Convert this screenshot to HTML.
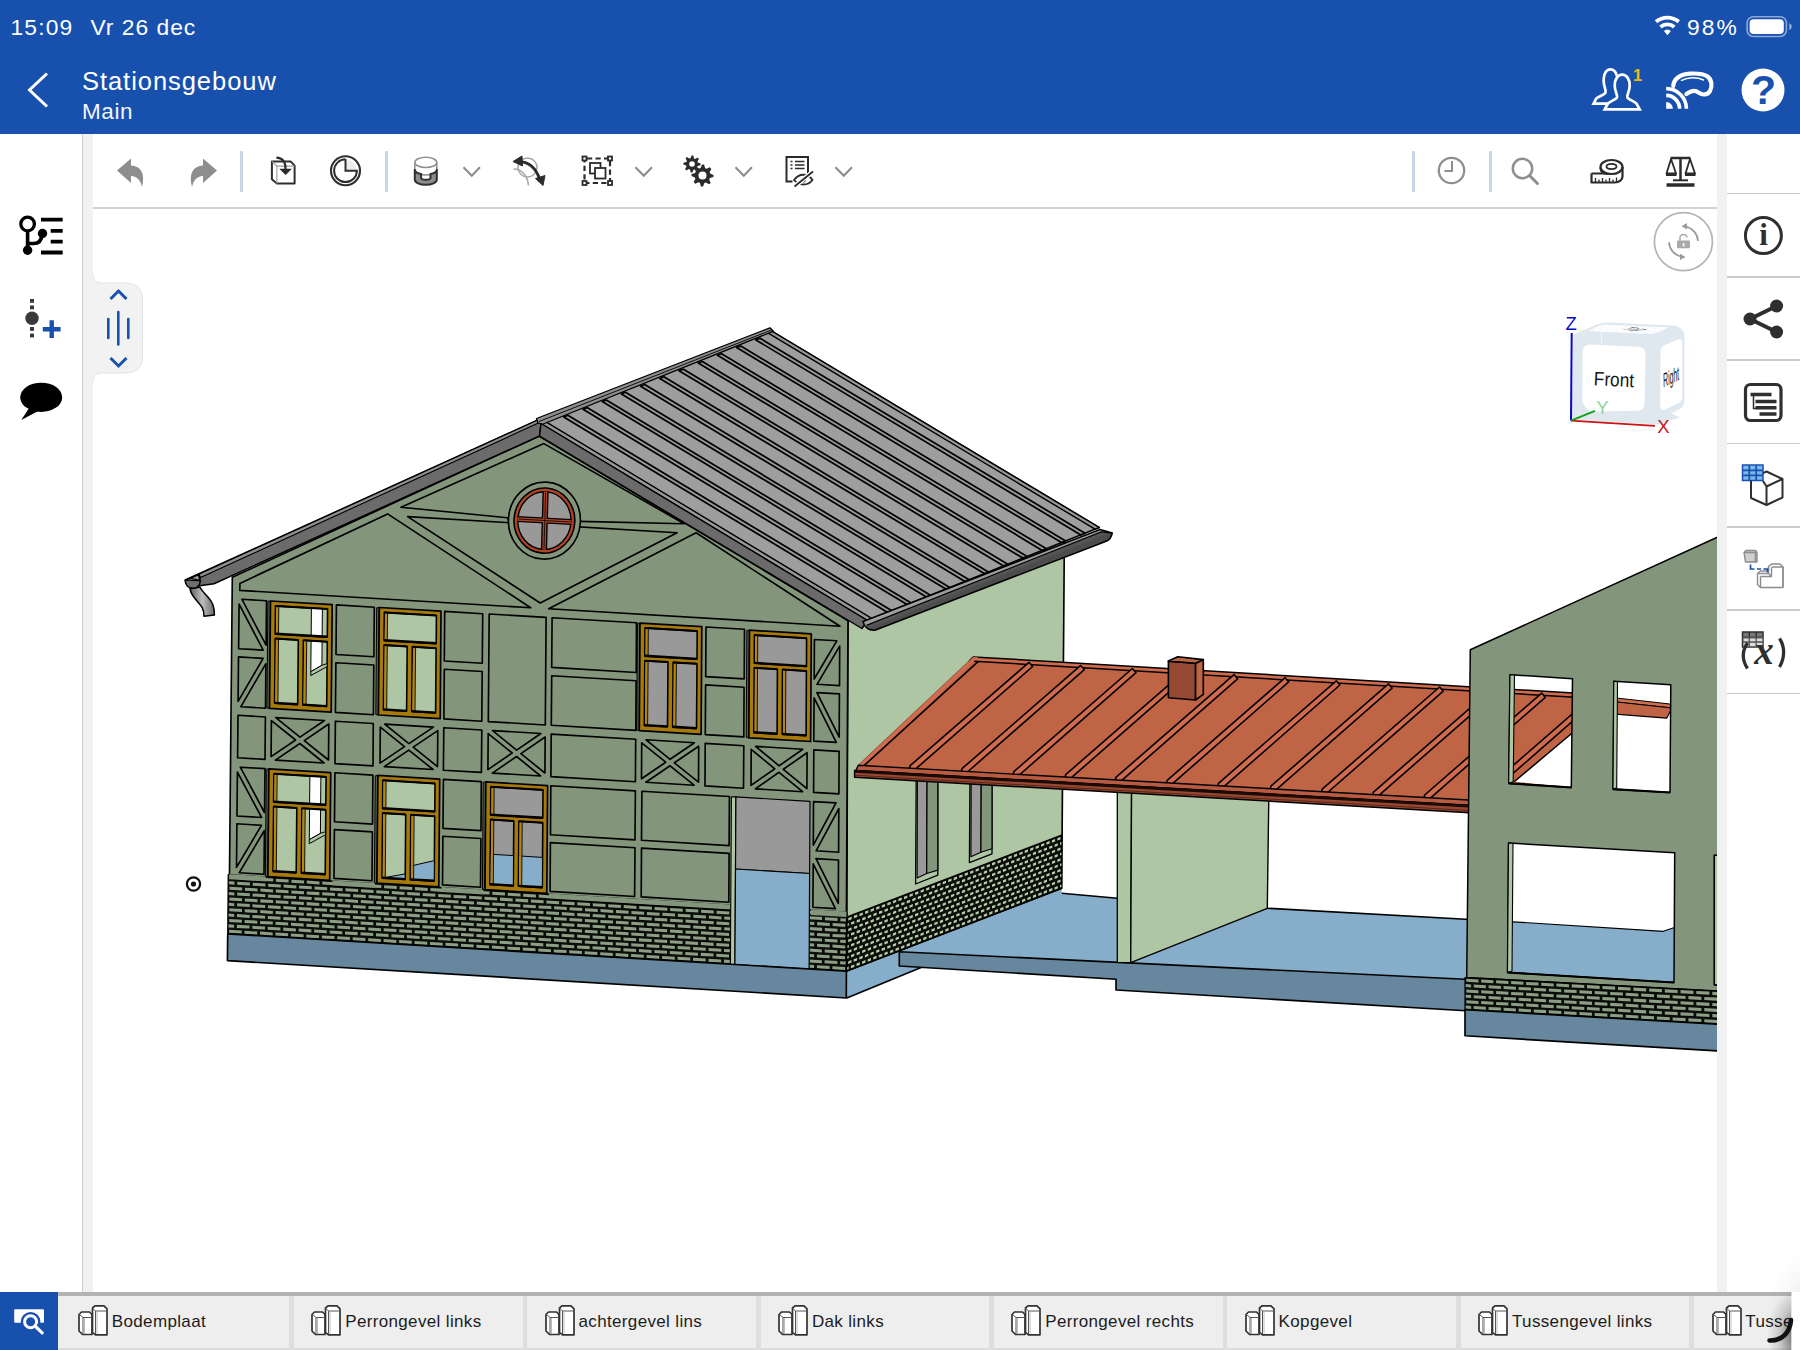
<!DOCTYPE html>
<html lang="nl"><head><meta charset="utf-8"><title>Stationsgebouw</title>
<style>
*{box-sizing:border-box;margin:0;padding:0}
html,body{width:1800px;height:1350px;overflow:hidden;background:#fff;font-family:"Liberation Sans",sans-serif;}
#app{position:relative;width:1800px;height:1350px;overflow:hidden;background:#fff}
.abs{position:absolute}
#hdr{position:absolute;left:0;top:0;width:1800px;height:134.4px;background:#1850ae;color:#fff}
#hdr .t{position:absolute;white-space:nowrap;line-height:1}
#lbar{position:absolute;left:82px;top:134px;width:11px;height:1158px;background:#f1f1f1;border-left:1px solid #cfcfcf}
#rbar{position:absolute;left:1717px;top:134px;width:10px;height:1158px;background:#f1f1f1}
#tline{position:absolute;left:93px;top:207px;width:1624px;height:2px;background:#d4d4d4}
.vdiv{position:absolute;width:3px;height:41px;top:150.5px;background:#c9d6e6;border-radius:1px}
.rsep{position:absolute;left:1727px;width:73px;height:1.6px;background:#cbcbcb}
#tabs{position:absolute;left:0;top:1292px;width:1791.5px;height:58px;background:#eeeeee;overflow:hidden}
#tabs .top{position:absolute;left:0;top:0;width:100%;height:4px;background:#b3b3b3}
#tabs .bot{position:absolute;left:0;top:55.5px;width:100%;height:3px;background:#dcdcdc}
#tabs .sep{position:absolute;top:4px;width:4.5px;height:54px;background:#dedede}
#tabs .lbl{position:absolute;top:19.5px;font-size:17px;line-height:20px;color:#1c1c1c;white-space:nowrap;letter-spacing:0.35px}
#tabs svg.ti{position:absolute;top:13px}
#srch{position:absolute;left:0;top:1292px;width:58px;height:58px;background:#1850ae}
svg{overflow:visible}
</style></head><body><div id="app">
<svg class="abs" style="left:93px;top:209px" width="1624" height="1083" viewBox="93 209 1624 1083" fill="none" stroke-linejoin="round"><defs><clipPath id="vp"><rect x="93" y="209" width="1624" height="1083"/></clipPath></defs><g clip-path="url(#vp)">
<polygon points="846.8,971.0 1061.7,888.3 1061.7,893.3 1117.3,898.3 1117.3,962.5 899.3,951.7 921.7,967.3 846.8,998.0" fill="#86aeca" stroke="none" stroke-width="1.65" />
<polyline points="846.8,998.0 921.7,967.3" fill="none" stroke="#000" stroke-width="1.65" />
<polyline points="1061.7,893.3 1117.3,898.3" fill="none" stroke="#000" stroke-width="1.65" />
<polygon points="1130.7,962.7 1267.3,908.3 1470.0,919.5 1470.0,979.5" fill="#86aeca" stroke="none" stroke-width="1.65" />
<polyline points="1267.3,908.3 1470.0,919.5" fill="none" stroke="#000" stroke-width="1.65" />
<polygon points="899.3,951.7 1470.0,979.5 1470.0,1011.0 1116.0,990.0 1116.0,979.3 899.3,966.0" fill="#66879e" stroke="#000" stroke-width="1.65" />
<polygon points="848.0,600.0 1064.5,520.0 1061.7,888.3 846.6,971.0" fill="#aec6a4" stroke="#000" stroke-width="1.65" />
<polygon points="916.2,770.0 937.8,770.0 937.8,875.1 915.6,884.0" fill="#aec6a4" stroke="#000" stroke-width="1.3" />
<polygon points="917.4,770.0 927.1,770.0 926.7,873.5 917.1,878.0" fill="#999999" stroke="#000" stroke-width="1.2" />
<polygon points="927.1,770.0 937.8,770.0 937.8,870.1 926.7,873.5" fill="#83957b" stroke="#000" stroke-width="1.2" />
<polygon points="970.0,770.0 992.0,770.0 992.0,853.8 969.4,862.7" fill="#aec6a4" stroke="#000" stroke-width="1.3" />
<polygon points="971.2,770.0 981.3,770.0 980.9,852.2 970.9,856.7" fill="#999999" stroke="#000" stroke-width="1.2" />
<polygon points="981.3,770.0 992.0,770.0 992.0,848.8 980.9,852.2" fill="#83957b" stroke="#000" stroke-width="1.2" />
<polygon points="847.2,916.9 1061.6,835.1 1061.6,888.4 847.0,971.2" fill="#0b0d0a" stroke="#000" stroke-width="1.2" />
<path d="M848.3 917.9L851.7 916.7L851.7 919.2L848.3 920.4ZM853.9 915.8L857.3 914.5L857.2 917.0L853.9 918.3ZM859.5 913.7L862.8 912.4L862.8 914.9L859.5 916.2ZM865.1 911.5L868.4 910.3L868.4 912.8L865.1 914.0ZM870.6 909.4L874.0 908.1L874.0 910.6L870.6 911.9ZM876.2 907.3L879.5 906.0L879.5 908.5L876.2 909.8ZM881.8 905.2L885.1 903.9L885.1 906.4L881.8 907.7ZM887.3 903.0L890.7 901.8L890.7 904.3L887.3 905.5ZM892.9 900.9L896.2 899.7L896.2 902.1L892.9 903.4ZM898.4 898.8L901.8 897.5L901.8 900.0L898.4 901.3ZM904.0 896.7L907.3 895.4L907.3 897.9L904.0 899.2ZM909.5 894.6L912.8 893.3L912.8 895.8L909.5 897.1ZM915.1 892.5L918.4 891.2L918.4 893.7L915.1 894.9ZM920.6 890.4L923.9 889.1L923.9 891.6L920.6 892.8ZM926.1 888.2L929.4 887.0L929.4 889.5L926.1 890.7ZM931.6 886.1L934.9 884.9L934.9 887.4L931.6 888.6ZM937.2 884.0L940.5 882.8L940.5 885.2L937.1 886.5ZM942.7 881.9L946.0 880.7L946.0 883.1L942.7 884.4ZM948.2 879.8L951.5 878.6L951.5 881.0L948.2 882.3ZM953.7 877.7L957.0 876.5L957.0 878.9L953.7 880.2ZM959.2 875.6L962.5 874.4L962.5 876.8L959.2 878.1ZM964.7 873.5L967.9 872.3L967.9 874.7L964.7 876.0ZM970.1 871.4L973.4 870.2L973.4 872.7L970.1 873.9ZM975.6 869.4L978.9 868.1L978.9 870.6L975.6 871.8ZM981.1 867.3L984.4 866.0L984.4 868.5L981.1 869.7ZM986.6 865.2L989.9 863.9L989.9 866.4L986.6 867.6ZM992.0 863.1L995.3 861.8L995.3 864.3L992.0 865.5ZM997.5 861.0L1000.8 859.8L1000.8 862.2L997.5 863.5ZM1003.0 858.9L1006.2 857.7L1006.2 860.1L1003.0 861.4ZM1008.4 856.8L1011.7 855.6L1011.7 858.0L1008.4 859.3ZM1013.9 854.8L1017.1 853.5L1017.1 856.0L1013.9 857.2ZM1019.3 852.7L1022.6 851.4L1022.6 853.9L1019.3 855.1ZM1024.7 850.6L1028.0 849.4L1028.0 851.8L1024.7 853.1ZM1030.2 848.5L1033.4 847.3L1033.4 849.7L1030.2 851.0ZM1035.6 846.5L1038.9 845.2L1038.9 847.7L1035.6 848.9ZM1041.0 844.4L1044.3 843.1L1044.3 845.6L1041.0 846.8ZM1046.5 842.3L1049.7 841.1L1049.7 843.5L1046.4 844.8ZM1051.9 840.3L1055.1 839.0L1055.1 841.5L1051.9 842.7ZM1057.3 838.2L1060.5 837.0L1060.5 839.4L1057.3 840.6ZM847.4 923.7L848.9 923.1L848.8 925.6L847.4 926.2ZM851.1 922.3L854.4 921.0L854.4 923.5L851.1 924.8ZM856.7 920.2L860.0 918.9L860.0 921.4L856.7 922.7ZM862.3 918.0L865.6 916.7L865.6 919.2L862.2 920.5ZM867.8 915.9L871.2 914.6L871.2 917.1L867.8 918.4ZM873.4 913.8L876.7 912.5L876.7 915.0L873.4 916.3ZM879.0 911.6L882.3 910.4L882.3 912.9L879.0 914.1ZM884.5 909.5L887.9 908.2L887.9 910.7L884.5 912.0ZM890.1 907.4L893.4 906.1L893.4 908.6L890.1 909.9ZM895.6 905.3L899.0 904.0L899.0 906.5L895.6 907.8ZM901.2 903.1L904.5 901.9L904.5 904.4L901.2 905.6ZM906.7 901.0L910.1 899.8L910.1 902.2L906.7 903.5ZM912.3 898.9L915.6 897.6L915.6 900.1L912.3 901.4ZM917.8 896.8L921.1 895.5L921.1 898.0L917.8 899.3ZM923.3 894.7L926.7 893.4L926.6 895.9L923.3 897.2ZM928.9 892.6L932.2 891.3L932.2 893.8L928.9 895.1ZM934.4 890.5L937.7 889.2L937.7 891.7L934.4 892.9ZM939.9 888.4L943.2 887.1L943.2 889.6L939.9 890.8ZM945.4 886.3L948.7 885.0L948.7 887.5L945.4 888.7ZM950.9 884.2L954.2 882.9L954.2 885.4L950.9 886.6ZM956.4 882.1L959.7 880.8L959.7 883.3L956.4 884.5ZM961.9 880.0L965.2 878.7L965.2 881.2L961.9 882.4ZM967.4 877.9L970.7 876.6L970.7 879.1L967.4 880.3ZM972.9 875.8L976.2 874.5L976.2 877.0L972.9 878.2ZM978.4 873.7L981.6 872.4L981.6 874.9L978.4 876.1ZM983.8 871.6L987.1 870.3L987.1 872.8L983.8 874.0ZM989.3 869.5L992.6 868.2L992.6 870.7L989.3 872.0ZM994.8 867.4L998.0 866.1L998.0 868.6L994.8 869.9ZM1000.2 865.3L1003.5 864.1L1003.5 866.5L1000.2 867.8ZM1005.7 863.2L1009.0 862.0L1009.0 864.4L1005.7 865.7ZM1011.1 861.1L1014.4 859.9L1014.4 862.4L1011.1 863.6ZM1016.6 859.1L1019.8 857.8L1019.8 860.3L1016.6 861.5ZM1022.0 857.0L1025.3 855.7L1025.3 858.2L1022.0 859.4ZM1027.5 854.9L1030.7 853.7L1030.7 856.1L1027.5 857.4ZM1032.9 852.8L1036.1 851.6L1036.1 854.0L1032.9 855.3ZM1038.3 850.8L1041.6 849.5L1041.6 852.0L1038.3 853.2ZM1043.7 848.7L1047.0 847.4L1047.0 849.9L1043.7 851.1ZM1049.2 846.6L1052.4 845.4L1052.4 847.8L1049.2 849.1ZM1054.6 844.5L1057.8 843.3L1057.8 845.8L1054.6 847.0ZM1060.0 842.5L1061.4 841.9L1061.4 844.4L1060.0 844.9ZM848.3 928.8L851.6 927.5L851.6 930.0L848.3 931.3ZM853.9 926.7L857.2 925.4L857.2 927.9L853.9 929.1ZM859.4 924.5L862.8 923.2L862.8 925.7L859.4 927.0ZM865.0 922.4L868.4 921.1L868.4 923.6L865.0 924.9ZM870.6 920.2L873.9 919.0L873.9 921.5L870.6 922.7ZM876.2 918.1L879.5 916.8L879.5 919.3L876.2 920.6ZM881.7 916.0L885.1 914.7L885.1 917.2L881.7 918.5ZM887.3 913.9L890.6 912.6L890.6 915.1L887.3 916.3ZM892.9 911.7L896.2 910.5L896.2 912.9L892.9 914.2ZM898.4 909.6L901.7 908.3L901.7 910.8L898.4 912.1ZM904.0 907.5L907.3 906.2L907.3 908.7L903.9 910.0ZM909.5 905.4L912.8 904.1L912.8 906.6L909.5 907.9ZM915.0 903.3L918.4 902.0L918.3 904.5L915.0 905.7ZM920.6 901.1L923.9 899.9L923.9 902.3L920.6 903.6ZM926.1 899.0L929.4 897.8L929.4 900.2L926.1 901.5ZM931.6 896.9L934.9 895.6L934.9 898.1L931.6 899.4ZM937.1 894.8L940.4 893.5L940.4 896.0L937.1 897.3ZM942.6 892.7L945.9 891.4L945.9 893.9L942.6 895.2ZM948.1 890.6L951.4 889.3L951.4 891.8L948.1 893.1ZM953.6 888.5L956.9 887.2L956.9 889.7L953.6 891.0ZM959.1 886.4L962.4 885.1L962.4 887.6L959.1 888.9ZM964.6 884.3L967.9 883.0L967.9 885.5L964.6 886.8ZM970.1 882.2L973.4 880.9L973.4 883.4L970.1 884.7ZM975.6 880.1L978.9 878.8L978.9 881.3L975.6 882.6ZM981.1 878.0L984.4 876.7L984.4 879.2L981.1 880.5ZM986.6 875.9L989.8 874.6L989.8 877.1L986.6 878.4ZM992.0 873.8L995.3 872.5L995.3 875.0L992.0 876.3ZM997.5 871.7L1000.8 870.5L1000.8 872.9L997.5 874.2ZM1002.9 869.6L1006.2 868.4L1006.2 870.8L1002.9 872.1ZM1008.4 867.5L1011.7 866.3L1011.7 868.7L1008.4 870.0ZM1013.9 865.5L1017.1 864.2L1017.1 866.7L1013.9 867.9ZM1019.3 863.4L1022.6 862.1L1022.6 864.6L1019.3 865.8ZM1024.7 861.3L1028.0 860.0L1028.0 862.5L1024.7 863.7ZM1030.2 859.2L1033.4 858.0L1033.4 860.4L1030.2 861.7ZM1035.6 857.1L1038.9 855.9L1038.9 858.3L1035.6 859.6ZM1041.0 855.1L1044.3 853.8L1044.3 856.3L1041.0 857.5ZM1046.4 853.0L1049.7 851.7L1049.7 854.2L1046.4 855.4ZM1051.9 850.9L1055.1 849.7L1055.1 852.1L1051.9 853.4ZM1057.3 848.8L1060.5 847.6L1060.5 850.1L1057.3 851.3ZM847.3 934.6L848.8 934.0L848.8 936.5L847.3 937.1ZM851.0 933.1L854.4 931.9L854.4 934.4L851.0 935.6ZM856.6 931.0L860.0 929.7L860.0 932.2L856.6 933.5ZM862.2 928.9L865.6 927.6L865.6 930.1L862.2 931.4ZM867.8 926.7L871.1 925.5L871.1 927.9L867.8 929.2ZM873.4 924.6L876.7 923.3L876.7 925.8L873.4 927.1ZM878.9 922.5L882.3 921.2L882.3 923.7L878.9 925.0ZM884.5 920.3L887.8 919.1L887.8 921.5L884.5 922.8ZM890.1 918.2L893.4 916.9L893.4 919.4L890.1 920.7ZM895.6 916.1L898.9 914.8L898.9 917.3L895.6 918.6ZM901.2 914.0L904.5 912.7L904.5 915.2L901.2 916.4ZM906.7 911.8L910.0 910.6L910.0 913.0L906.7 914.3ZM912.3 909.7L915.6 908.4L915.6 910.9L912.2 912.2ZM917.8 907.6L921.1 906.3L921.1 908.8L917.8 910.1ZM923.3 905.5L926.6 904.2L926.6 906.7L923.3 908.0ZM928.8 903.4L932.2 902.1L932.1 904.6L928.8 905.8ZM934.4 901.2L937.7 900.0L937.7 902.5L934.4 903.7ZM939.9 899.1L943.2 897.9L943.2 900.3L939.9 901.6ZM945.4 897.0L948.7 895.8L948.7 898.2L945.4 899.5ZM950.9 894.9L954.2 893.7L954.2 896.1L950.9 897.4ZM956.4 892.8L959.7 891.5L959.7 894.0L956.4 895.3ZM961.9 890.7L965.2 889.4L965.2 891.9L961.9 893.2ZM967.4 888.6L970.7 887.3L970.7 889.8L967.4 891.1ZM972.9 886.5L976.1 885.2L976.1 887.7L972.9 889.0ZM978.3 884.4L981.6 883.1L981.6 885.6L978.3 886.9ZM983.8 882.3L987.1 881.0L987.1 883.5L983.8 884.8ZM989.3 880.2L992.6 879.0L992.6 881.4L989.3 882.7ZM994.8 878.1L998.0 876.9L998.0 879.3L994.8 880.6ZM1000.2 876.0L1003.5 874.8L1003.5 877.2L1000.2 878.5ZM1005.7 873.9L1008.9 872.7L1008.9 875.1L1005.7 876.4ZM1011.1 871.8L1014.4 870.6L1014.4 873.1L1011.1 874.3ZM1016.6 869.8L1019.8 868.5L1019.8 871.0L1016.6 872.2ZM1022.0 867.7L1025.3 866.4L1025.3 868.9L1022.0 870.1ZM1027.5 865.6L1030.7 864.3L1030.7 866.8L1027.5 868.1ZM1032.9 863.5L1036.1 862.3L1036.1 864.7L1032.9 866.0ZM1038.3 861.4L1041.6 860.2L1041.6 862.6L1038.3 863.9ZM1043.7 859.4L1047.0 858.1L1047.0 860.6L1043.7 861.8ZM1049.2 857.3L1052.4 856.0L1052.4 858.5L1049.2 859.7ZM1054.6 855.2L1057.8 854.0L1057.8 856.4L1054.6 857.7ZM1060.0 853.1L1061.4 852.6L1061.4 855.0L1060.0 855.6ZM848.2 939.6L851.6 938.4L851.6 940.9L848.2 942.1ZM853.8 937.5L857.2 936.2L857.2 938.7L853.8 940.0ZM859.4 935.4L862.8 934.1L862.8 936.6L859.4 937.9ZM865.0 933.2L868.3 931.9L868.3 934.4L865.0 935.7ZM870.6 931.1L873.9 929.8L873.9 932.3L870.6 933.6ZM876.1 928.9L879.5 927.7L879.5 930.2L876.1 931.4ZM881.7 926.8L885.0 925.5L885.0 928.0L881.7 929.3ZM887.3 924.7L890.6 923.4L890.6 925.9L887.3 927.2ZM892.8 922.5L896.2 921.3L896.2 923.8L892.8 925.0ZM898.4 920.4L901.7 919.1L901.7 921.6L898.4 922.9ZM903.9 918.3L907.3 917.0L907.2 919.5L903.9 920.8ZM909.5 916.2L912.8 914.9L912.8 917.4L909.5 918.7ZM915.0 914.0L918.3 912.8L918.3 915.3L915.0 916.5ZM920.5 911.9L923.9 910.7L923.8 913.1L920.5 914.4ZM926.1 909.8L929.4 908.5L929.4 911.0L926.1 912.3ZM931.6 907.7L934.9 906.4L934.9 908.9L931.6 910.2ZM937.1 905.6L940.4 904.3L940.4 906.8L937.1 908.1ZM942.6 903.5L945.9 902.2L945.9 904.7L942.6 905.9ZM948.1 901.3L951.4 900.1L951.4 902.6L948.1 903.8ZM953.6 899.2L956.9 898.0L956.9 900.4L953.6 901.7ZM959.1 897.1L962.4 895.9L962.4 898.3L959.1 899.6ZM964.6 895.0L967.9 893.8L967.9 896.2L964.6 897.5ZM970.1 892.9L973.4 891.7L973.4 894.1L970.1 895.4ZM975.6 890.8L978.9 889.6L978.9 892.0L975.6 893.3ZM981.1 888.7L984.4 887.5L984.4 889.9L981.1 891.2ZM986.5 886.6L989.8 885.4L989.8 887.8L986.5 889.1ZM992.0 884.5L995.3 883.3L995.3 885.7L992.0 887.0ZM997.5 882.4L1000.8 881.2L1000.8 883.6L997.5 884.9ZM1002.9 880.3L1006.2 879.1L1006.2 881.5L1002.9 882.8ZM1008.4 878.2L1011.7 877.0L1011.7 879.5L1008.4 880.7ZM1013.8 876.2L1017.1 874.9L1017.1 877.4L1013.8 878.6ZM1019.3 874.1L1022.6 872.8L1022.6 875.3L1019.3 876.5ZM1024.7 872.0L1028.0 870.7L1028.0 873.2L1024.7 874.4ZM1030.2 869.9L1033.4 868.6L1033.4 871.1L1030.2 872.4ZM1035.6 867.8L1038.9 866.6L1038.9 869.0L1035.6 870.3ZM1041.0 865.7L1044.3 864.5L1044.3 866.9L1041.0 868.2ZM1046.4 863.7L1049.7 862.4L1049.7 864.9L1046.4 866.1ZM1051.9 861.6L1055.1 860.3L1055.1 862.8L1051.9 864.0ZM1057.3 859.5L1060.5 858.3L1060.5 860.7L1057.3 862.0ZM847.3 945.4L848.8 944.9L848.8 947.4L847.3 947.9ZM851.0 944.0L854.4 942.7L854.4 945.2L851.0 946.5ZM856.6 941.9L860.0 940.6L859.9 943.1L856.6 944.4ZM862.2 939.7L865.5 938.4L865.5 940.9L862.2 942.2ZM867.8 937.6L871.1 936.3L871.1 938.8L867.8 940.1ZM873.3 935.4L876.7 934.1L876.7 936.6L873.3 937.9ZM878.9 933.3L882.2 932.0L882.2 934.5L878.9 935.8ZM884.5 931.2L887.8 929.9L887.8 932.4L884.5 933.6ZM890.0 929.0L893.4 927.7L893.4 930.2L890.0 931.5ZM895.6 926.9L898.9 925.6L898.9 928.1L895.6 929.4ZM901.1 924.8L904.5 923.5L904.5 926.0L901.1 927.2ZM906.7 922.6L910.0 921.4L910.0 923.8L906.7 925.1ZM912.2 920.5L915.5 919.2L915.5 921.7L912.2 923.0ZM917.8 918.4L921.1 917.1L921.1 919.6L917.8 920.9ZM923.3 916.3L926.6 915.0L926.6 917.5L923.3 918.7ZM928.8 914.1L932.1 912.9L932.1 915.3L928.8 916.6ZM934.3 912.0L937.6 910.8L937.6 913.2L934.3 914.5ZM939.9 909.9L943.2 908.6L943.2 911.1L939.8 912.4ZM945.4 907.8L948.7 906.5L948.7 909.0L945.4 910.3ZM950.9 905.7L954.2 904.4L954.2 906.9L950.9 908.2ZM956.4 903.6L959.7 902.3L959.7 904.8L956.4 906.0ZM961.9 901.5L965.2 900.2L965.2 902.7L961.9 903.9ZM967.4 899.3L970.6 898.1L970.6 900.6L967.4 901.8ZM972.8 897.2L976.1 896.0L976.1 898.4L972.8 899.7ZM978.3 895.1L981.6 893.9L981.6 896.3L978.3 897.6ZM983.8 893.0L987.1 891.8L987.1 894.2L983.8 895.5ZM989.3 890.9L992.6 889.7L992.6 892.1L989.3 893.4ZM994.7 888.8L998.0 887.6L998.0 890.0L994.7 891.3ZM1000.2 886.7L1003.5 885.5L1003.5 887.9L1000.2 889.2ZM1005.7 884.6L1008.9 883.4L1008.9 885.9L1005.7 887.1ZM1011.1 882.6L1014.4 881.3L1014.4 883.8L1011.1 885.0ZM1016.6 880.5L1019.8 879.2L1019.8 881.7L1016.6 882.9ZM1022.0 878.4L1025.3 877.1L1025.3 879.6L1022.0 880.8ZM1027.4 876.3L1030.7 875.0L1030.7 877.5L1027.4 878.7ZM1032.9 874.2L1036.1 872.9L1036.1 875.4L1032.9 876.7ZM1038.3 872.1L1041.6 870.9L1041.6 873.3L1038.3 874.6ZM1043.7 870.0L1047.0 868.8L1047.0 871.2L1043.7 872.5ZM1049.2 868.0L1052.4 866.7L1052.4 869.2L1049.2 870.4ZM1054.6 865.9L1057.8 864.6L1057.8 867.1L1054.6 868.3ZM1060.0 863.8L1061.4 863.3L1061.4 865.7L1060.0 866.3ZM848.2 950.5L851.5 949.2L851.5 951.7L848.2 953.0ZM853.8 948.4L857.1 947.1L857.1 949.6L853.8 950.9ZM859.4 946.2L862.7 944.9L862.7 947.4L859.4 948.7ZM865.0 944.1L868.3 942.8L868.3 945.3L864.9 946.6ZM870.5 941.9L873.9 940.6L873.9 943.1L870.5 944.4ZM876.1 939.8L879.4 938.5L879.4 941.0L876.1 942.3ZM881.7 937.6L885.0 936.4L885.0 938.8L881.7 940.1ZM887.2 935.5L890.6 934.2L890.6 936.7L887.2 938.0ZM892.8 933.4L896.1 932.1L896.1 934.6L892.8 935.9ZM898.3 931.2L901.7 930.0L901.7 932.4L898.3 933.7ZM903.9 929.1L907.2 927.8L907.2 930.3L903.9 931.6ZM909.4 927.0L912.8 925.7L912.8 928.2L909.4 929.5ZM915.0 924.8L918.3 923.6L918.3 926.1L915.0 927.3ZM920.5 922.7L923.8 921.4L923.8 923.9L920.5 925.2ZM926.0 920.6L929.4 919.3L929.3 921.8L926.0 923.1ZM931.6 918.5L934.9 917.2L934.9 919.7L931.6 921.0ZM937.1 916.4L940.4 915.1L940.4 917.6L937.1 918.8ZM942.6 914.2L945.9 913.0L945.9 915.4L942.6 916.7ZM948.1 912.1L951.4 910.8L951.4 913.3L948.1 914.6ZM953.6 910.0L956.9 908.7L956.9 911.2L953.6 912.5ZM959.1 907.9L962.4 906.6L962.4 909.1L959.1 910.4ZM964.6 905.8L967.9 904.5L967.9 907.0L964.6 908.3ZM970.1 903.7L973.4 902.4L973.4 904.9L970.1 906.1ZM975.6 901.6L978.9 900.3L978.9 902.8L975.6 904.0ZM981.1 899.5L984.3 898.2L984.3 900.7L981.1 901.9ZM986.5 897.4L989.8 896.1L989.8 898.6L986.5 899.8ZM992.0 895.2L995.3 894.0L995.3 896.5L992.0 897.7ZM997.5 893.1L1000.7 891.9L1000.7 894.4L997.5 895.6ZM1002.9 891.1L1006.2 889.8L1006.2 892.3L1002.9 893.5ZM1008.4 889.0L1011.7 887.7L1011.7 890.2L1008.4 891.4ZM1013.8 886.9L1017.1 885.6L1017.1 888.1L1013.8 889.3ZM1019.3 884.8L1022.5 883.5L1022.5 886.0L1019.3 887.2ZM1024.7 882.7L1028.0 881.4L1028.0 883.9L1024.7 885.1ZM1030.2 880.6L1033.4 879.3L1033.4 881.8L1030.2 883.0ZM1035.6 878.5L1038.8 877.2L1038.8 879.7L1035.6 881.0ZM1041.0 876.4L1044.3 875.2L1044.3 877.6L1041.0 878.9ZM1046.4 874.3L1049.7 873.1L1049.7 875.5L1046.4 876.8ZM1051.9 872.3L1055.1 871.0L1055.1 873.5L1051.9 874.7ZM1057.3 870.2L1060.5 868.9L1060.5 871.4L1057.3 872.6ZM847.3 956.3L848.7 955.7L848.7 958.2L847.2 958.8ZM851.0 954.9L854.3 953.6L854.3 956.1L851.0 957.4ZM856.6 952.7L859.9 951.4L859.9 953.9L856.6 955.2ZM862.1 950.6L865.5 949.3L865.5 951.8L862.1 953.1ZM867.7 948.4L871.1 947.1L871.1 949.6L867.7 950.9ZM873.3 946.3L876.6 945.0L876.6 947.5L873.3 948.8ZM878.9 944.1L882.2 942.8L882.2 945.3L878.9 946.6ZM884.4 942.0L887.8 940.7L887.8 943.2L884.4 944.5ZM890.0 939.8L893.3 938.6L893.3 941.1L890.0 942.3ZM895.6 937.7L898.9 936.4L898.9 938.9L895.5 940.2ZM901.1 935.6L904.4 934.3L904.4 936.8L901.1 938.1ZM906.7 933.4L910.0 932.2L910.0 934.6L906.6 935.9ZM912.2 931.3L915.5 930.0L915.5 932.5L912.2 933.8ZM917.7 929.2L921.1 927.9L921.0 930.4L917.7 931.7ZM923.3 927.1L926.6 925.8L926.6 928.3L923.3 929.5ZM928.8 924.9L932.1 923.7L932.1 926.1L928.8 927.4ZM934.3 922.8L937.6 921.5L937.6 924.0L934.3 925.3ZM939.8 920.7L943.1 919.4L943.1 921.9L939.8 923.2ZM945.3 918.6L948.6 917.3L948.6 919.8L945.3 921.0ZM950.8 916.4L954.1 915.2L954.1 917.6L950.8 918.9ZM956.3 914.3L959.6 913.1L959.6 915.5L956.3 916.8ZM961.8 912.2L965.1 910.9L965.1 913.4L961.8 914.7ZM967.3 910.1L970.6 908.8L970.6 911.3L967.3 912.6ZM972.8 908.0L976.1 906.7L976.1 909.2L972.8 910.5ZM978.3 905.9L981.6 904.6L981.6 907.1L978.3 908.3ZM983.8 903.8L987.1 902.5L987.1 905.0L983.8 906.2ZM989.3 901.7L992.5 900.4L992.5 902.9L989.3 904.1ZM994.7 899.6L998.0 898.3L998.0 900.8L994.7 902.0ZM1000.2 897.5L1003.5 896.2L1003.5 898.7L1000.2 899.9ZM1005.7 895.4L1008.9 894.1L1008.9 896.6L1005.6 897.8ZM1011.1 893.3L1014.4 892.0L1014.4 894.5L1011.1 895.7ZM1016.6 891.2L1019.8 889.9L1019.8 892.4L1016.6 893.6ZM1022.0 889.1L1025.3 887.8L1025.3 890.3L1022.0 891.5ZM1027.4 887.0L1030.7 885.7L1030.7 888.2L1027.4 889.4ZM1032.9 884.9L1036.1 883.6L1036.1 886.1L1032.9 887.3ZM1038.3 882.8L1041.6 881.5L1041.6 884.0L1038.3 885.3ZM1043.7 880.7L1047.0 879.5L1047.0 881.9L1043.7 883.2ZM1049.2 878.6L1052.4 877.4L1052.4 879.8L1049.1 881.1ZM1054.6 876.5L1057.8 875.3L1057.8 877.7L1054.6 879.0ZM1060.0 874.5L1061.4 873.9L1061.4 876.4L1060.0 876.9ZM848.2 961.4L851.5 960.1L851.5 962.6L848.1 963.9ZM853.7 959.2L857.1 957.9L857.1 960.4L853.7 961.7ZM859.3 957.1L862.7 955.8L862.7 958.3L859.3 959.6ZM864.9 954.9L868.3 953.6L868.3 956.1L864.9 957.4ZM870.5 952.8L873.8 951.5L873.8 954.0L870.5 955.3ZM876.1 950.6L879.4 949.3L879.4 951.8L876.1 953.1ZM881.6 948.5L885.0 947.2L885.0 949.7L881.6 951.0ZM887.2 946.3L890.5 945.0L890.5 947.5L887.2 948.8ZM892.8 944.2L896.1 942.9L896.1 945.4L892.8 946.7ZM898.3 942.1L901.6 940.8L901.6 943.3L898.3 944.5ZM903.9 939.9L907.2 938.6L907.2 941.1L903.9 942.4ZM909.4 937.8L912.7 936.5L912.7 939.0L909.4 940.3ZM914.9 935.6L918.3 934.4L918.3 936.9L914.9 938.1ZM920.5 933.5L923.8 932.2L923.8 934.7L920.5 936.0ZM926.0 931.4L929.3 930.1L929.3 932.6L926.0 933.9ZM931.5 929.3L934.9 928.0L934.8 930.5L931.5 931.7ZM937.1 927.1L940.4 925.9L940.4 928.3L937.1 929.6ZM942.6 925.0L945.9 923.7L945.9 926.2L942.6 927.5ZM948.1 922.9L951.4 921.6L951.4 924.1L948.1 925.4ZM953.6 920.8L956.9 919.5L956.9 922.0L953.6 923.2ZM959.1 918.6L962.4 917.4L962.4 919.9L959.1 921.1ZM964.6 916.5L967.9 915.3L967.9 917.7L964.6 919.0ZM970.1 914.4L973.4 913.1L973.4 915.6L970.1 916.9ZM975.6 912.3L978.8 911.0L978.8 913.5L975.6 914.8ZM981.0 910.2L984.3 908.9L984.3 911.4L981.0 912.7ZM986.5 908.1L989.8 906.8L989.8 909.3L986.5 910.6ZM992.0 906.0L995.3 904.7L995.3 907.2L992.0 908.4ZM997.5 903.9L1000.7 902.6L1000.7 905.1L997.5 906.3ZM1002.9 901.8L1006.2 900.5L1006.2 903.0L1002.9 904.2ZM1008.4 899.7L1011.6 898.4L1011.6 900.9L1008.4 902.1ZM1013.8 897.6L1017.1 896.3L1017.1 898.8L1013.8 900.0ZM1019.3 895.5L1022.5 894.2L1022.5 896.7L1019.3 897.9ZM1024.7 893.4L1028.0 892.1L1028.0 894.6L1024.7 895.8ZM1030.2 891.3L1033.4 890.0L1033.4 892.5L1030.2 893.7ZM1035.6 889.2L1038.8 887.9L1038.8 890.4L1035.6 891.6ZM1041.0 887.1L1044.3 885.8L1044.3 888.3L1041.0 889.6ZM1046.4 885.0L1049.7 883.8L1049.7 886.2L1046.4 887.5ZM1051.9 882.9L1055.1 881.7L1055.1 884.1L1051.9 885.4ZM1057.3 880.8L1060.5 879.6L1060.5 882.0L1057.3 883.3ZM847.2 967.2L848.7 966.6L848.7 969.1L847.2 969.7ZM850.9 965.7L854.3 964.4L854.3 966.9L850.9 968.2ZM856.5 963.6L859.9 962.3L859.9 964.8L856.5 966.1ZM862.1 961.4L865.5 960.1L865.5 962.6L862.1 963.9ZM867.7 959.3L871.0 958.0L871.0 960.5L867.7 961.8ZM873.3 957.1L876.6 955.8L876.6 958.3L873.3 959.6ZM878.8 955.0L882.2 953.7L882.2 956.2L878.8 957.5ZM884.4 952.8L887.7 951.5L887.7 954.0L884.4 955.3ZM890.0 950.7L893.3 949.4L893.3 951.9L890.0 953.2ZM895.5 948.5L898.9 947.2L898.9 949.7L895.5 951.0ZM901.1 946.4L904.4 945.1L904.4 947.6L901.1 948.9ZM906.6 944.3L910.0 943.0L909.9 945.5L906.6 946.7ZM912.2 942.1L915.5 940.8L915.5 943.3L912.2 944.6ZM917.7 940.0L921.0 938.7L921.0 941.2L917.7 942.5ZM923.2 937.8L926.6 936.6L926.5 939.1L923.2 940.3ZM928.8 935.7L932.1 934.4L932.1 936.9L928.8 938.2ZM934.3 933.6L937.6 932.3L937.6 934.8L934.3 936.1ZM939.8 931.5L943.1 930.2L943.1 932.7L939.8 933.9ZM945.3 929.3L948.6 928.1L948.6 930.5L945.3 931.8ZM950.8 927.2L954.1 925.9L954.1 928.4L950.8 929.7ZM956.3 925.1L959.6 923.8L959.6 926.3L956.3 927.6ZM961.8 923.0L965.1 921.7L965.1 924.2L961.8 925.4ZM967.3 920.9L970.6 919.6L970.6 922.1L967.3 923.3ZM972.8 918.7L976.1 917.5L976.1 919.9L972.8 921.2ZM978.3 916.6L981.6 915.4L981.6 917.8L978.3 919.1ZM983.8 914.5L987.1 913.2L987.1 915.7L983.8 917.0ZM989.2 912.4L992.5 911.1L992.5 913.6L989.2 914.9ZM994.7 910.3L998.0 909.0L998.0 911.5L994.7 912.8ZM1000.2 908.2L1003.5 906.9L1003.5 909.4L1000.2 910.7ZM1005.6 906.1L1008.9 904.8L1008.9 907.3L1005.6 908.5ZM1011.1 904.0L1014.4 902.7L1014.4 905.2L1011.1 906.4ZM1016.5 901.9L1019.8 900.6L1019.8 903.1L1016.5 904.3ZM1022.0 899.8L1025.3 898.5L1025.3 901.0L1022.0 902.2ZM1027.4 897.7L1030.7 896.4L1030.7 898.9L1027.4 900.1ZM1032.9 895.6L1036.1 894.3L1036.1 896.8L1032.9 898.0ZM1038.3 893.5L1041.6 892.2L1041.6 894.7L1038.3 895.9ZM1043.7 891.4L1047.0 890.1L1047.0 892.6L1043.7 893.9ZM1049.1 889.3L1052.4 888.1L1052.4 890.5L1049.1 891.8ZM1054.6 887.2L1057.8 886.0L1057.8 888.4L1054.6 889.7ZM1060.0 885.1L1061.4 884.6L1061.4 887.0L1060.0 887.6Z" fill="#b7cda6"/>
<polygon points="1117.3,780.0 1131.6,780.0 1130.7,962.7 1117.3,962.3" fill="#aec6a4" stroke="#000" stroke-width="1.3" />
<polygon points="1131.6,780.0 1268.9,790.0 1267.3,908.3 1130.7,962.7" fill="#aec6a4" stroke="#000" stroke-width="1.4" />
<polygon points="973.5,656.9 1680.0,699.4 1680.0,824.5 854.6,776.6 854.6,770.6 858.3,765.3" fill="#c06446" stroke="none" stroke-width="1.65" />
<polygon points="973.5,656.9 1680.0,699.4 1680.0,703.6 969.5,660.9" fill="#d06c4d" stroke="#000" stroke-width="1.5" />
<path d="M1029.0 662.3 L910.1 765.7 Q908.5 771.1 913.8 770.6 L1032.6 666.5Z" fill="#d06c4d" stroke="#000" stroke-width="1.600"/>
<path d="M1080.7 665.4 L962.0 768.7 Q960.3 774.0 965.7 773.5 L1084.3 669.6Z" fill="#d06c4d" stroke="#000" stroke-width="1.600"/>
<path d="M1132.4 668.5 L1013.9 771.6 Q1012.2 776.9 1017.6 776.5 L1136.0 672.7Z" fill="#d06c4d" stroke="#000" stroke-width="1.600"/>
<path d="M1184.0 671.6 L1065.7 774.6 Q1064.0 779.9 1069.4 779.4 L1187.6 675.8Z" fill="#d06c4d" stroke="#000" stroke-width="1.600"/>
<path d="M1234.0 674.6 L1115.9 777.4 Q1114.2 782.7 1119.5 782.3 L1237.6 678.8Z" fill="#d06c4d" stroke="#000" stroke-width="1.600"/>
<path d="M1285.1 677.7 L1167.2 780.3 Q1165.5 785.7 1170.8 785.2 L1288.7 681.9Z" fill="#d06c4d" stroke="#000" stroke-width="1.600"/>
<path d="M1336.3 680.8 L1218.5 783.3 Q1216.9 788.6 1222.2 788.1 L1339.9 685.0Z" fill="#d06c4d" stroke="#000" stroke-width="1.600"/>
<path d="M1388.5 683.9 L1270.9 786.2 Q1269.3 791.5 1274.6 791.1 L1392.1 688.1Z" fill="#d06c4d" stroke="#000" stroke-width="1.600"/>
<path d="M1439.6 687.0 L1322.2 789.2 Q1320.6 794.5 1325.9 794.0 L1443.2 691.2Z" fill="#d06c4d" stroke="#000" stroke-width="1.600"/>
<path d="M1490.7 690.1 L1373.5 792.1 Q1371.8 797.4 1377.2 796.9 L1494.3 694.3Z" fill="#d06c4d" stroke="#000" stroke-width="1.600"/>
<path d="M1541.7 693.1 L1424.7 795.0 Q1423.0 800.3 1428.4 799.8 L1545.3 697.4Z" fill="#d06c4d" stroke="#000" stroke-width="1.600"/>
<path d="M1592.7 696.2 L1475.9 797.9 Q1474.2 803.2 1479.6 802.7 L1596.3 700.4Z" fill="#d06c4d" stroke="#000" stroke-width="1.600"/>
<polygon points="973.5,656.9 978.3,657.2 863.5,766.1 858.3,765.3" fill="#d06c4d" stroke="none" stroke-width="1.65" />
<polyline points="978.3,661.3 863.5,766.1" fill="none" stroke="#000" stroke-width="1.6" />
<polyline points="973.2,656.9 858.0,765.3" fill="none" stroke="#7a3a28" stroke-width="0.7" />
<polygon points="858.3,765.3 1680.0,812.0 1680.0,817.2 856.0,770.4" fill="#b85b40" stroke="#000" stroke-width="1.4" />
<polygon points="854.6,770.6 1680.0,817.5 1680.0,824.8 854.6,777.3" fill="#964832" stroke="#000" stroke-width="1.5" />
<polyline points="855.0,771.3 1680.0,818.2" fill="none" stroke="#1c0a06" stroke-width="2.8" />
<polyline points="855.5,775.3 1680.0,822.6" fill="none" stroke="#5a2517" stroke-width="1.0" />
<polygon points="1168.4,661.1 1195.6,663.3 1195.6,700.0 1168.4,697.8" fill="#964a36" stroke="#000" stroke-width="1.65" />
<polygon points="1195.6,663.3 1203.3,659.6 1203.3,694.4 1195.6,700.0" fill="#c06446" stroke="#000" stroke-width="1.65" />
<polygon points="1168.4,661.1 1177.8,656.7 1203.3,659.6 1195.6,663.3" fill="#c06446" stroke="#000" stroke-width="1.65" />
<polygon points="1514.2,781.7 1572.5,732.8 1617.5,695.2 1700.0,640.0 1700.0,800.0" fill="#fff" stroke="none" stroke-width="1.65" />
<polyline points="1514.2,781.7 1572.5,732.8" fill="none" stroke="#000" stroke-width="1.5" />
<polygon points="228.9,934.2 232.3,577.3 539.0,436.0 842.0,617.0 848.0,620.7 846.1,971.4" fill="#83957b" stroke="#000" stroke-width="1.65" />
<polygon points="543.9,443.6 401.0,507.3 507.4,517.7 507.4,518.6 579.3,521.4 684.2,523.8" fill="#83957b" stroke="#000" stroke-width="1.65" />
<polygon points="407.6,516.6 540.2,603.0 677.1,532.7" fill="#83957b" stroke="#000" stroke-width="1.65" />
<polygon points="387.6,513.9 530.7,607.7 239.8,590.4 239.9,583.4" fill="#83957b" stroke="#000" stroke-width="1.65" />
<polygon points="696.1,532.8 548.7,608.8 840.0,626.2" fill="#83957b" stroke="#000" stroke-width="1.65" />
<ellipse cx="544.4" cy="520.6" rx="36" ry="38.5" fill="#83957b" stroke="#000" stroke-width="1.65" transform="rotate(3 544.4 520.6)"/>
<ellipse cx="544.4" cy="520.6" rx="30.4" ry="32.6" fill="#b04426" stroke="#000" stroke-width="1.6" transform="rotate(3 544.4 520.6)"/>
<ellipse cx="544.4" cy="520.6" rx="26.6" ry="28.8" fill="#999999" stroke="#000" stroke-width="1.4" transform="rotate(3 544.4 520.6)"/>
<path d="M545.6 491.6 L544.0 549.6 M517.4 519.0 L571.4 522.0" stroke="#000" stroke-width="6.2"/>
<path d="M545.6 491.6 L544.0 549.6 M517.4 519.0 L571.4 522.0" stroke="#b04426" stroke-width="3.4"/>
<path d="M545.6 492.6 L544.0 548.6 M518.4 519.0 L570.4 522.0" stroke="#000" stroke-width="0.8"/>
<polygon points="242.0,599.3 266.5,600.7 266.1,645.2" fill="#83957b" stroke="#000" stroke-width="1.65" />
<polygon points="239.1,604.2 238.6,648.7 263.2,650.1" fill="#83957b" stroke="#000" stroke-width="1.65" />
<polygon points="238.5,656.9 263.1,658.4 238.1,701.4" fill="#83957b" stroke="#000" stroke-width="1.65" />
<polygon points="240.9,706.7 265.5,708.2 265.9,663.7" fill="#83957b" stroke="#000" stroke-width="1.65" />
<polygon points="336.4,604.9 374.3,607.2 373.9,656.8 336.0,654.5" fill="#83957b" stroke="#000" stroke-width="1.65" />
<polygon points="335.9,662.8 373.8,665.0 373.4,714.7 335.4,712.4" fill="#83957b" stroke="#000" stroke-width="1.65" />
<polygon points="444.7,611.4 482.7,613.7 482.3,663.2 444.3,661.0" fill="#83957b" stroke="#000" stroke-width="1.65" />
<polygon points="444.3,669.3 482.2,671.5 481.8,721.2 443.9,718.9" fill="#83957b" stroke="#000" stroke-width="1.65" />
<polygon points="552.1,617.8 636.5,622.8 636.2,672.5 551.7,667.4" fill="#83957b" stroke="#000" stroke-width="1.65" />
<polygon points="551.7,675.7 636.1,680.7 635.8,730.4 551.3,725.3" fill="#83957b" stroke="#000" stroke-width="1.65" />
<polygon points="706.0,627.0 744.5,629.3 744.2,678.9 705.7,676.6" fill="#83957b" stroke="#000" stroke-width="1.65" />
<polygon points="705.6,684.9 744.1,687.2 743.8,736.9 705.3,734.6" fill="#83957b" stroke="#000" stroke-width="1.65" />
<polygon points="489.2,614.0 546.1,617.4 545.3,725.0 488.3,721.6" fill="#83957b" stroke="#000" stroke-width="1.65" />
<polygon points="814.4,639.5 836.8,640.8 814.2,679.0" fill="#83957b" stroke="#000" stroke-width="1.65" />
<polygon points="817.0,684.3 839.5,685.6 839.7,646.1" fill="#83957b" stroke="#000" stroke-width="1.65" />
<polygon points="816.9,692.6 839.4,693.9 839.2,737.2" fill="#83957b" stroke="#000" stroke-width="1.65" />
<polygon points="814.1,697.8 813.8,741.1 836.3,742.4" fill="#83957b" stroke="#000" stroke-width="1.65" />
<polygon points="238.0,715.3 265.4,717.0 265.0,759.4 237.6,757.8" fill="#83957b" stroke="#000" stroke-width="1.65" />
<polygon points="335.4,721.2 373.3,723.5 373.0,765.9 335.0,763.6" fill="#83957b" stroke="#000" stroke-width="1.65" />
<polygon points="443.8,727.7 481.8,730.0 481.4,772.4 443.4,770.2" fill="#83957b" stroke="#000" stroke-width="1.65" />
<polygon points="551.2,734.1 635.7,739.2 635.4,781.7 550.9,776.6" fill="#83957b" stroke="#000" stroke-width="1.65" />
<polygon points="705.2,743.4 743.8,745.7 743.5,788.2 705.0,785.9" fill="#83957b" stroke="#000" stroke-width="1.65" />
<polygon points="813.8,749.9 839.1,751.4 838.9,793.9 813.6,792.4" fill="#83957b" stroke="#000" stroke-width="1.65" />
<polygon points="275.8,717.6 324.5,720.5 300.0,737.1" fill="#83957b" stroke="#000" stroke-width="1.65" />
<polygon points="275.4,760.1 324.1,763.0 299.9,743.5" fill="#83957b" stroke="#000" stroke-width="1.65" />
<polygon points="271.4,720.6 271.1,756.6 295.6,740.0" fill="#83957b" stroke="#000" stroke-width="1.65" />
<polygon points="328.8,724.0 328.5,760.0 304.3,740.6" fill="#83957b" stroke="#000" stroke-width="1.65" />
<polygon points="384.7,724.1 433.4,727.1 408.9,743.6" fill="#83957b" stroke="#000" stroke-width="1.65" />
<polygon points="384.3,766.6 433.1,769.5 408.8,750.1" fill="#83957b" stroke="#000" stroke-width="1.65" />
<polygon points="380.3,727.1 380.0,763.1 404.5,746.6" fill="#83957b" stroke="#000" stroke-width="1.65" />
<polygon points="437.8,730.6 437.5,766.6 413.2,747.1" fill="#83957b" stroke="#000" stroke-width="1.65" />
<polygon points="492.6,730.6 540.9,733.5 516.6,750.1" fill="#83957b" stroke="#000" stroke-width="1.65" />
<polygon points="492.3,773.1 540.6,776.0 516.6,756.5" fill="#83957b" stroke="#000" stroke-width="1.65" />
<polygon points="488.2,733.6 487.9,769.6 512.2,753.0" fill="#83957b" stroke="#000" stroke-width="1.65" />
<polygon points="545.2,737.0 544.9,773.0 520.9,753.6" fill="#83957b" stroke="#000" stroke-width="1.65" />
<polygon points="646.1,739.8 694.4,742.7 670.1,759.3" fill="#83957b" stroke="#000" stroke-width="1.65" />
<polygon points="645.8,782.3 694.1,785.2 670.1,765.8" fill="#83957b" stroke="#000" stroke-width="1.65" />
<polygon points="641.7,742.8 641.5,778.8 665.7,762.2" fill="#83957b" stroke="#000" stroke-width="1.65" />
<polygon points="698.7,746.2 698.5,782.2 674.4,762.8" fill="#83957b" stroke="#000" stroke-width="1.65" />
<polygon points="755.6,746.4 802.8,749.2 779.1,765.8" fill="#83957b" stroke="#000" stroke-width="1.65" />
<polygon points="755.3,788.9 802.6,791.7 779.0,772.3" fill="#83957b" stroke="#000" stroke-width="1.65" />
<polygon points="751.2,749.4 751.0,785.4 774.8,768.8" fill="#83957b" stroke="#000" stroke-width="1.65" />
<polygon points="807.1,752.7 806.9,788.7 783.3,769.3" fill="#83957b" stroke="#000" stroke-width="1.65" />
<polygon points="240.3,767.2 265.0,768.6 264.5,812.5" fill="#83957b" stroke="#000" stroke-width="1.65" />
<polygon points="237.4,772.1 237.0,816.0 261.6,817.5" fill="#83957b" stroke="#000" stroke-width="1.65" />
<polygon points="236.9,823.8 261.5,825.3 236.5,867.4" fill="#83957b" stroke="#000" stroke-width="1.65" />
<polygon points="239.3,872.7 264.0,874.2 264.4,830.5" fill="#83957b" stroke="#000" stroke-width="1.65" />
<polygon points="334.9,772.8 372.9,775.1 372.5,824.1 334.5,821.8" fill="#83957b" stroke="#000" stroke-width="1.65" />
<polygon points="334.4,829.6 372.4,831.9 372.0,880.7 334.0,878.4" fill="#83957b" stroke="#000" stroke-width="1.65" />
<polygon points="443.4,779.4 481.3,781.6 481.0,830.6 443.0,828.4" fill="#83957b" stroke="#000" stroke-width="1.65" />
<polygon points="442.9,836.2 480.9,838.5 480.5,887.2 442.5,884.9" fill="#83957b" stroke="#000" stroke-width="1.65" />
<polygon points="550.8,785.8 635.4,790.9 635.0,839.9 550.5,834.8" fill="#83957b" stroke="#000" stroke-width="1.65" />
<polygon points="550.4,842.6 635.0,847.7 634.6,896.5 550.1,891.4" fill="#83957b" stroke="#000" stroke-width="1.65" />
<polygon points="641.9,791.3 729.4,796.5 729.1,845.6 641.5,840.3" fill="#83957b" stroke="#000" stroke-width="1.65" />
<polygon points="641.5,848.1 729.1,853.4 728.8,902.2 641.2,896.9" fill="#83957b" stroke="#000" stroke-width="1.65" />
<polygon points="813.5,801.6 836.0,802.9 813.3,845.2" fill="#83957b" stroke="#000" stroke-width="1.65" />
<polygon points="816.1,850.8 838.6,852.2 838.8,808.6" fill="#83957b" stroke="#000" stroke-width="1.65" />
<polygon points="816.0,858.6 838.5,860.0 838.3,903.3" fill="#83957b" stroke="#000" stroke-width="1.65" />
<polygon points="813.2,863.9 812.9,907.2 835.4,908.6" fill="#83957b" stroke="#000" stroke-width="1.65" />
<polygon points="228.2,874.7 846.8,912.0 846.4,971.2 227.7,933.9" fill="#0b0d0a" stroke="#000" stroke-width="1.2" />
<path d="M229.6 876.0L242.3 876.7L242.3 879.7L229.6 879.0ZM245.0 876.9L257.7 877.7L257.7 880.7L245.0 879.9ZM260.5 877.8L273.2 878.6L273.2 881.6L260.5 880.8ZM275.9 878.8L288.6 879.5L288.6 882.5L275.9 881.8ZM291.4 879.7L304.1 880.5L304.1 883.5L291.4 882.7ZM306.8 880.6L319.5 881.4L319.5 884.4L306.8 883.6ZM322.3 881.6L335.0 882.3L335.0 885.3L322.3 884.6ZM337.7 882.5L350.4 883.3L350.4 886.3L337.7 885.5ZM353.2 883.4L365.9 884.2L365.9 887.2L353.2 886.4ZM368.7 884.3L381.4 885.1L381.3 888.1L368.6 887.4ZM384.1 885.3L396.8 886.0L396.8 889.1L384.1 888.3ZM399.6 886.2L412.3 887.0L412.2 890.0L399.5 889.2ZM415.0 887.1L427.7 887.9L427.7 890.9L415.0 890.2ZM430.5 888.1L443.2 888.8L443.2 891.9L430.4 891.1ZM445.9 889.0L458.6 889.8L458.6 892.8L445.9 892.0ZM461.4 889.9L474.1 890.7L474.1 893.7L461.4 893.0ZM476.9 890.9L489.6 891.6L489.5 894.6L476.8 893.9ZM492.3 891.8L505.0 892.6L505.0 895.6L492.3 894.8ZM507.8 892.7L520.5 893.5L520.5 896.5L507.7 895.7ZM523.2 893.7L535.9 894.4L535.9 897.4L523.2 896.7ZM538.7 894.6L551.4 895.4L551.4 898.4L538.7 897.6ZM554.2 895.5L566.9 896.3L566.9 899.3L554.1 898.5ZM569.6 896.5L582.3 897.2L582.3 900.2L569.6 899.5ZM585.1 897.4L597.8 898.2L597.8 901.2L585.1 900.4ZM600.6 898.3L613.3 899.1L613.3 902.1L600.5 901.3ZM616.0 899.3L628.7 900.0L628.7 903.0L616.0 902.3ZM631.5 900.2L644.2 901.0L644.2 904.0L631.5 903.2ZM647.0 901.1L659.7 901.9L659.7 904.9L646.9 904.1ZM662.4 902.1L675.1 902.8L675.1 905.8L662.4 905.1ZM677.9 903.0L690.6 903.8L690.6 906.8L677.9 906.0ZM693.4 903.9L706.1 904.7L706.1 907.7L693.4 906.9ZM708.8 904.9L721.6 905.6L721.5 908.6L708.8 907.9ZM724.3 905.8L737.0 906.5L737.0 909.6L724.3 908.8ZM739.8 906.7L752.5 907.5L752.5 910.5L739.8 909.7ZM755.3 907.6L768.0 908.4L768.0 911.4L755.3 910.7ZM770.7 908.6L783.5 909.3L783.4 912.4L770.7 911.6ZM786.2 909.5L798.9 910.3L798.9 913.3L786.2 912.5ZM801.7 910.4L814.4 911.2L814.4 914.2L801.7 913.5ZM817.2 911.4L829.9 912.1L829.9 915.2L817.2 914.4ZM832.7 912.3L845.4 913.1L845.4 916.1L832.6 915.3ZM228.9 881.3L234.5 881.6L234.5 884.7L228.9 884.3ZM237.3 881.8L250.0 882.6L249.9 885.6L237.2 884.8ZM252.7 882.7L265.4 883.5L265.4 886.5L252.7 885.8ZM268.2 883.7L280.9 884.4L280.8 887.5L268.1 886.7ZM283.6 884.6L296.3 885.4L296.3 888.4L283.6 887.6ZM299.1 885.5L311.8 886.3L311.7 889.3L299.0 888.5ZM314.5 886.5L327.2 887.2L327.2 890.2L314.5 889.5ZM330.0 887.4L342.7 888.2L342.6 891.2L329.9 890.4ZM345.4 888.3L358.1 889.1L358.1 892.1L345.4 891.3ZM360.9 889.3L373.6 890.0L373.6 893.0L360.9 892.3ZM376.3 890.2L389.0 891.0L389.0 894.0L376.3 893.2ZM391.8 891.1L404.5 891.9L404.5 894.9L391.8 894.1ZM407.2 892.1L419.9 892.8L419.9 895.8L407.2 895.1ZM422.7 893.0L435.4 893.8L435.4 896.8L422.7 896.0ZM438.2 893.9L450.9 894.7L450.8 897.7L438.1 896.9ZM453.6 894.9L466.3 895.6L466.3 898.6L453.6 897.9ZM469.1 895.8L481.8 896.5L481.8 899.6L469.1 898.8ZM484.5 896.7L497.2 897.5L497.2 900.5L484.5 899.7ZM500.0 897.6L512.7 898.4L512.7 901.4L500.0 900.7ZM515.5 898.6L528.2 899.3L528.1 902.4L515.4 901.6ZM530.9 899.5L543.6 900.3L543.6 903.3L530.9 902.5ZM546.4 900.4L559.1 901.2L559.1 904.2L546.4 903.5ZM561.9 901.4L574.6 902.1L574.5 905.2L561.8 904.4ZM577.3 902.3L590.0 903.1L590.0 906.1L577.3 905.3ZM592.8 903.2L605.5 904.0L605.5 907.0L592.8 906.3ZM608.3 904.2L621.0 904.9L620.9 908.0L608.2 907.2ZM623.7 905.1L636.4 905.9L636.4 908.9L623.7 908.1ZM639.2 906.0L651.9 906.8L651.9 909.8L639.2 909.1ZM654.7 907.0L667.4 907.7L667.4 910.8L654.6 910.0ZM670.1 907.9L682.8 908.7L682.8 911.7L670.1 910.9ZM685.6 908.8L698.3 909.6L698.3 912.6L685.6 911.8ZM701.1 909.8L713.8 910.5L713.8 913.5L701.1 912.8ZM716.5 910.7L729.3 911.5L729.3 914.5L716.5 913.7ZM732.0 911.6L744.7 912.4L744.7 915.4L732.0 914.6ZM747.5 912.6L760.2 913.3L760.2 916.3L747.5 915.6ZM763.0 913.5L775.7 914.3L775.7 917.3L763.0 916.5ZM778.5 914.4L791.2 915.2L791.2 918.2L778.4 917.4ZM793.9 915.4L806.7 916.1L806.6 919.1L793.9 918.4ZM809.4 916.3L822.1 917.1L822.1 920.1L809.4 919.3ZM824.9 917.2L837.6 918.0L837.6 921.0L824.9 920.2ZM840.4 918.2L846.0 918.5L845.9 921.5L840.3 921.2ZM229.5 886.7L242.2 887.5L242.2 890.5L229.5 889.7ZM244.9 887.7L257.6 888.4L257.6 891.4L244.9 890.7ZM260.4 888.6L273.1 889.4L273.1 892.4L260.4 891.6ZM275.8 889.5L288.5 890.3L288.5 893.3L275.8 892.5ZM291.3 890.4L304.0 891.2L304.0 894.2L291.3 893.5ZM306.7 891.4L319.4 892.1L319.4 895.2L306.7 894.4ZM322.2 892.3L334.9 893.1L334.9 896.1L322.2 895.3ZM337.6 893.2L350.4 894.0L350.3 897.0L337.6 896.3ZM353.1 894.2L365.8 894.9L365.8 898.0L353.1 897.2ZM368.6 895.1L381.3 895.9L381.2 898.9L368.5 898.1ZM384.0 896.0L396.7 896.8L396.7 899.8L384.0 899.1ZM399.5 897.0L412.2 897.7L412.2 900.7L399.4 900.0ZM414.9 897.9L427.6 898.7L427.6 901.7L414.9 900.9ZM430.4 898.8L443.1 899.6L443.1 902.6L430.4 901.8ZM445.8 899.8L458.6 900.5L458.5 903.5L445.8 902.8ZM461.3 900.7L474.0 901.5L474.0 904.5L461.3 903.7ZM476.8 901.6L489.5 902.4L489.5 905.4L476.7 904.6ZM492.2 902.6L504.9 903.3L504.9 906.3L492.2 905.6ZM507.7 903.5L520.4 904.3L520.4 907.3L507.7 906.5ZM523.2 904.4L535.9 905.2L535.8 908.2L523.1 907.4ZM538.6 905.4L551.3 906.1L551.3 909.1L538.6 908.4ZM554.1 906.3L566.8 907.1L566.8 910.1L554.1 909.3ZM569.5 907.2L582.3 908.0L582.2 911.0L569.5 910.2ZM585.0 908.2L597.7 908.9L597.7 911.9L585.0 911.2ZM600.5 909.1L613.2 909.9L613.2 912.9L600.5 912.1ZM616.0 910.0L628.7 910.8L628.6 913.8L615.9 913.0ZM631.4 911.0L644.1 911.7L644.1 914.7L631.4 914.0ZM646.9 911.9L659.6 912.7L659.6 915.7L646.9 914.9ZM662.4 912.8L675.1 913.6L675.1 916.6L662.3 915.8ZM677.8 913.8L690.6 914.5L690.5 917.5L677.8 916.8ZM693.3 914.7L706.0 915.5L706.0 918.5L693.3 917.7ZM708.8 915.6L721.5 916.4L721.5 919.4L708.8 918.6ZM724.3 916.6L737.0 917.3L737.0 920.3L724.2 919.6ZM739.7 917.5L752.4 918.2L752.4 921.3L739.7 920.5ZM755.2 918.4L767.9 919.2L767.9 922.2L755.2 921.4ZM770.7 919.3L783.4 920.1L783.4 923.1L770.7 922.4ZM786.2 920.3L798.9 921.0L798.9 924.1L786.1 923.3ZM801.6 921.2L814.4 922.0L814.3 925.0L801.6 924.2ZM817.1 922.1L829.8 922.9L829.8 925.9L817.1 925.2ZM832.6 923.1L845.3 923.8L845.3 926.9L832.6 926.1ZM228.8 892.1L234.4 892.4L234.4 895.4L228.8 895.1ZM237.2 892.6L249.9 893.3L249.8 896.3L237.1 895.6ZM252.6 893.5L265.3 894.3L265.3 897.3L252.6 896.5ZM268.1 894.4L280.8 895.2L280.7 898.2L268.0 897.4ZM283.5 895.4L296.2 896.1L296.2 899.1L283.5 898.4ZM299.0 896.3L311.7 897.1L311.6 900.1L298.9 899.3ZM314.4 897.2L327.1 898.0L327.1 901.0L314.4 900.2ZM329.9 898.2L342.6 898.9L342.5 901.9L329.8 901.2ZM345.3 899.1L358.0 899.9L358.0 902.9L345.3 902.1ZM360.8 900.0L373.5 900.8L373.5 903.8L360.8 903.0ZM376.2 901.0L388.9 901.7L388.9 904.7L376.2 904.0ZM391.7 901.9L404.4 902.7L404.4 905.7L391.7 904.9ZM407.2 902.8L419.9 903.6L419.8 906.6L407.1 905.8ZM422.6 903.7L435.3 904.5L435.3 907.5L422.6 906.8ZM438.1 904.7L450.8 905.4L450.8 908.5L438.0 907.7ZM453.5 905.6L466.2 906.4L466.2 909.4L453.5 908.6ZM469.0 906.5L481.7 907.3L481.7 910.3L469.0 909.6ZM484.5 907.5L497.2 908.2L497.1 911.3L484.4 910.5ZM499.9 908.4L512.6 909.2L512.6 912.2L499.9 911.4ZM515.4 909.3L528.1 910.1L528.1 913.1L515.4 912.4ZM530.8 910.3L543.6 911.0L543.5 914.1L530.8 913.3ZM546.3 911.2L559.0 912.0L559.0 915.0L546.3 914.2ZM561.8 912.1L574.5 912.9L574.5 915.9L561.8 915.2ZM577.2 913.1L590.0 913.8L589.9 916.9L577.2 916.1ZM592.7 914.0L605.4 914.8L605.4 917.8L592.7 917.0ZM608.2 914.9L620.9 915.7L620.9 918.7L608.2 918.0ZM623.6 915.9L636.4 916.6L636.3 919.7L623.6 918.9ZM639.1 916.8L651.8 917.6L651.8 920.6L639.1 919.8ZM654.6 917.7L667.3 918.5L667.3 921.5L654.6 920.8ZM670.1 918.7L682.8 919.4L682.8 922.5L670.0 921.7ZM685.5 919.6L698.3 920.4L698.2 923.4L685.5 922.6ZM701.0 920.5L713.7 921.3L713.7 924.3L701.0 923.6ZM716.5 921.5L729.2 922.2L729.2 925.3L716.5 924.5ZM732.0 922.4L744.7 923.2L744.7 926.2L731.9 925.4ZM747.4 923.3L760.2 924.1L760.1 927.1L747.4 926.3ZM762.9 924.3L775.6 925.0L775.6 928.0L762.9 927.3ZM778.4 925.2L791.1 926.0L791.1 929.0L778.4 928.2ZM793.9 926.1L806.6 926.9L806.6 929.9L793.8 929.1ZM809.3 927.1L822.1 927.8L822.1 930.9L809.3 930.1ZM824.8 928.0L837.6 928.8L837.5 931.8L824.8 931.0ZM840.3 928.9L845.9 929.3L845.9 932.3L840.3 931.9ZM229.4 897.5L242.1 898.2L242.1 901.3L229.4 900.5ZM244.8 898.4L257.5 899.2L257.5 902.2L244.8 901.4ZM260.3 899.3L273.0 900.1L273.0 903.1L260.3 902.4ZM275.7 900.3L288.4 901.0L288.4 904.1L275.7 903.3ZM291.2 901.2L303.9 902.0L303.9 905.0L291.2 904.2ZM306.6 902.1L319.3 902.9L319.3 905.9L306.6 905.2ZM322.1 903.1L334.8 903.8L334.8 906.9L322.1 906.1ZM337.6 904.0L350.3 904.8L350.2 907.8L337.5 907.0ZM353.0 904.9L365.7 905.7L365.7 908.7L353.0 907.9ZM368.5 905.9L381.2 906.6L381.1 909.6L368.4 908.9ZM383.9 906.8L396.6 907.6L396.6 910.6L383.9 909.8ZM399.4 907.7L412.1 908.5L412.1 911.5L399.4 910.7ZM414.8 908.7L427.5 909.4L427.5 912.4L414.8 911.7ZM430.3 909.6L443.0 910.4L443.0 913.4L430.3 912.6ZM445.8 910.5L458.5 911.3L458.4 914.3L445.7 913.5ZM461.2 911.5L473.9 912.2L473.9 915.2L461.2 914.5ZM476.7 912.4L489.4 913.2L489.4 916.2L476.7 915.4ZM492.1 913.3L504.9 914.1L504.8 917.1L492.1 916.3ZM507.6 914.3L520.3 915.0L520.3 918.0L507.6 917.3ZM523.1 915.2L535.8 916.0L535.8 919.0L523.0 918.2ZM538.5 916.1L551.2 916.9L551.2 919.9L538.5 919.1ZM554.0 917.1L566.7 917.8L566.7 920.8L554.0 920.1ZM569.5 918.0L582.2 918.8L582.2 921.8L569.4 921.0ZM584.9 918.9L597.7 919.7L597.6 922.7L584.9 921.9ZM600.4 919.9L613.1 920.6L613.1 923.6L600.4 922.9ZM615.9 920.8L628.6 921.6L628.6 924.6L615.9 923.8ZM631.3 921.7L644.1 922.5L644.0 925.5L631.3 924.7ZM646.8 922.7L659.5 923.4L659.5 926.4L646.8 925.7ZM662.3 923.6L675.0 924.4L675.0 927.4L662.3 926.6ZM677.8 924.5L690.5 925.3L690.5 928.3L677.7 927.5ZM693.2 925.5L706.0 926.2L705.9 929.2L693.2 928.5ZM708.7 926.4L721.4 927.2L721.4 930.2L708.7 929.4ZM724.2 927.3L736.9 928.1L736.9 931.1L724.2 930.3ZM739.7 928.3L752.4 929.0L752.4 932.0L739.6 931.3ZM755.1 929.2L767.9 930.0L767.8 933.0L755.1 932.2ZM770.6 930.1L783.3 930.9L783.3 933.9L770.6 933.1ZM786.1 931.1L798.8 931.8L798.8 934.8L786.1 934.1ZM801.6 932.0L814.3 932.8L814.3 935.8L801.6 935.0ZM817.1 932.9L829.8 933.7L829.8 936.7L817.0 935.9ZM832.5 933.9L845.3 934.6L845.2 937.6L832.5 936.9ZM228.7 902.8L234.3 903.2L234.3 906.2L228.7 905.8ZM237.1 903.3L249.8 904.1L249.7 907.1L237.0 906.3ZM252.5 904.3L265.2 905.0L265.2 908.0L252.5 907.3ZM268.0 905.2L280.7 906.0L280.6 909.0L267.9 908.2ZM283.4 906.1L296.1 906.9L296.1 909.9L283.4 909.1ZM298.9 907.1L311.6 907.8L311.5 910.8L298.8 910.1ZM314.3 908.0L327.0 908.8L327.0 911.8L314.3 911.0ZM329.8 908.9L342.5 909.7L342.5 912.7L329.7 911.9ZM345.2 909.9L357.9 910.6L357.9 913.6L345.2 912.9ZM360.7 910.8L373.4 911.5L373.4 914.6L360.7 913.8ZM376.1 911.7L388.9 912.5L388.8 915.5L376.1 914.7ZM391.6 912.6L404.3 913.4L404.3 916.4L391.6 915.7ZM407.1 913.6L419.8 914.3L419.7 917.4L407.0 916.6ZM422.5 914.5L435.2 915.3L435.2 918.3L422.5 917.5ZM438.0 915.4L450.7 916.2L450.7 919.2L438.0 918.5ZM453.4 916.4L466.2 917.1L466.1 920.2L453.4 919.4ZM468.9 917.3L481.6 918.1L481.6 921.1L468.9 920.3ZM484.4 918.2L497.1 919.0L497.1 922.0L484.3 921.3ZM499.8 919.2L512.5 919.9L512.5 923.0L499.8 922.2ZM515.3 920.1L528.0 920.9L528.0 923.9L515.3 923.1ZM530.8 921.0L543.5 921.8L543.5 924.8L530.7 924.1ZM546.2 922.0L558.9 922.7L558.9 925.8L546.2 925.0ZM561.7 922.9L574.4 923.7L574.4 926.7L561.7 925.9ZM577.2 923.8L589.9 924.6L589.9 927.6L577.1 926.9ZM592.6 924.8L605.3 925.5L605.3 928.6L592.6 927.8ZM608.1 925.7L620.8 926.5L620.8 929.5L608.1 928.7ZM623.6 926.6L636.3 927.4L636.3 930.4L623.6 929.7ZM639.0 927.6L651.8 928.3L651.7 931.4L639.0 930.6ZM654.5 928.5L667.2 929.3L667.2 932.3L654.5 931.5ZM670.0 929.4L682.7 930.2L682.7 933.2L670.0 932.5ZM685.5 930.4L698.2 931.1L698.2 934.2L685.4 933.4ZM700.9 931.3L713.7 932.1L713.6 935.1L700.9 934.3ZM716.4 932.2L729.1 933.0L729.1 936.0L716.4 935.3ZM731.9 933.2L744.6 933.9L744.6 937.0L731.9 936.2ZM747.4 934.1L760.1 934.9L760.1 937.9L747.3 937.1ZM762.8 935.0L775.6 935.8L775.6 938.8L762.8 938.1ZM778.3 936.0L791.0 936.7L791.0 939.8L778.3 939.0ZM793.8 936.9L806.5 937.7L806.5 940.7L793.8 939.9ZM809.3 937.8L822.0 938.6L822.0 941.6L809.3 940.9ZM824.8 938.8L837.5 939.5L837.5 942.6L824.8 941.8ZM840.2 939.7L845.8 940.0L845.8 943.1L840.2 942.7ZM229.3 908.2L242.0 909.0L242.0 912.0L229.3 911.3ZM244.7 909.2L257.4 909.9L257.4 913.0L244.7 912.2ZM260.2 910.1L272.9 910.9L272.9 913.9L260.2 913.1ZM275.6 911.0L288.3 911.8L288.3 914.8L275.6 914.0ZM291.1 912.0L303.8 912.7L303.8 915.7L291.1 915.0ZM306.5 912.9L319.2 913.7L319.2 916.7L306.5 915.9ZM322.0 913.8L334.7 914.6L334.7 917.6L322.0 916.8ZM337.5 914.8L350.2 915.5L350.1 918.5L337.4 917.8ZM352.9 915.7L365.6 916.5L365.6 919.5L352.9 918.7ZM368.4 916.6L381.1 917.4L381.0 920.4L368.3 919.6ZM383.8 917.6L396.5 918.3L396.5 921.3L383.8 920.6ZM399.3 918.5L412.0 919.3L412.0 922.3L399.3 921.5ZM414.7 919.4L427.5 920.2L427.4 923.2L414.7 922.4ZM430.2 920.4L442.9 921.1L442.9 924.1L430.2 923.4ZM445.7 921.3L458.4 922.1L458.4 925.1L445.6 924.3ZM461.1 922.2L473.8 923.0L473.8 926.0L461.1 925.2ZM476.6 923.2L489.3 923.9L489.3 926.9L476.6 926.2ZM492.1 924.1L504.8 924.9L504.7 927.9L492.0 927.1ZM507.5 925.0L520.2 925.8L520.2 928.8L507.5 928.0ZM523.0 926.0L535.7 926.7L535.7 929.7L523.0 929.0ZM538.5 926.9L551.2 927.7L551.1 930.7L538.4 929.9ZM553.9 927.8L566.6 928.6L566.6 931.6L553.9 930.8ZM569.4 928.8L582.1 929.5L582.1 932.5L569.4 931.8ZM584.9 929.7L597.6 930.5L597.6 933.5L584.8 932.7ZM600.3 930.6L613.0 931.4L613.0 934.4L600.3 933.6ZM615.8 931.6L628.5 932.3L628.5 935.3L615.8 934.6ZM631.3 932.5L644.0 933.3L644.0 936.3L631.3 935.5ZM646.7 933.4L659.5 934.2L659.4 937.2L646.7 936.4ZM662.2 934.4L674.9 935.1L674.9 938.1L662.2 937.4ZM677.7 935.3L690.4 936.1L690.4 939.1L677.7 938.3ZM693.2 936.2L705.9 937.0L705.9 940.0L693.1 939.2ZM708.6 937.2L721.4 937.9L721.3 940.9L708.6 940.2ZM724.1 938.1L736.8 938.9L736.8 941.9L724.1 941.1ZM739.6 939.0L752.3 939.8L752.3 942.8L739.6 942.0ZM755.1 940.0L767.8 940.7L767.8 943.7L755.1 943.0ZM770.6 940.9L783.3 941.7L783.3 944.7L770.5 943.9ZM786.0 941.8L798.8 942.6L798.7 945.6L786.0 944.8ZM801.5 942.8L814.2 943.5L814.2 946.5L801.5 945.8ZM817.0 943.7L829.7 944.5L829.7 947.5L817.0 946.7ZM832.5 944.6L845.2 945.4L845.2 948.4L832.5 947.6ZM228.6 913.6L234.2 913.9L234.2 916.9L228.6 916.6ZM237.0 914.1L249.7 914.9L249.6 917.9L236.9 917.1ZM252.4 915.0L265.1 915.8L265.1 918.8L252.4 918.0ZM267.9 916.0L280.6 916.7L280.5 919.7L267.8 919.0ZM283.3 916.9L296.0 917.6L296.0 920.7L283.3 919.9ZM298.8 917.8L311.5 918.6L311.4 921.6L298.7 920.8ZM314.2 918.7L326.9 919.5L326.9 922.5L314.2 921.8ZM329.7 919.7L342.4 920.4L342.4 923.5L329.7 922.7ZM345.1 920.6L357.8 921.4L357.8 924.4L345.1 923.6ZM360.6 921.5L373.3 922.3L373.3 925.3L360.6 924.6ZM376.1 922.5L388.8 923.2L388.7 926.3L376.0 925.5ZM391.5 923.4L404.2 924.2L404.2 927.2L391.5 926.4ZM407.0 924.3L419.7 925.1L419.7 928.1L406.9 927.4ZM422.4 925.3L435.1 926.0L435.1 929.1L422.4 928.3ZM437.9 926.2L450.6 927.0L450.6 930.0L437.9 929.2ZM453.4 927.1L466.1 927.9L466.0 930.9L453.3 930.2ZM468.8 928.1L481.5 928.8L481.5 931.9L468.8 931.1ZM484.3 929.0L497.0 929.8L497.0 932.8L484.3 932.0ZM499.7 929.9L512.5 930.7L512.4 933.7L499.7 933.0ZM515.2 930.9L527.9 931.6L527.9 934.7L515.2 933.9ZM530.7 931.8L543.4 932.6L543.4 935.6L530.7 934.8ZM546.1 932.7L558.9 933.5L558.8 936.5L546.1 935.8ZM561.6 933.7L574.3 934.4L574.3 937.5L561.6 936.7ZM577.1 934.6L589.8 935.4L589.8 938.4L577.1 937.6ZM592.6 935.5L605.3 936.3L605.3 939.3L592.5 938.6ZM608.0 936.5L620.7 937.2L620.7 940.3L608.0 939.5ZM623.5 937.4L636.2 938.2L636.2 941.2L623.5 940.4ZM639.0 938.3L651.7 939.1L651.7 942.1L638.9 941.4ZM654.4 939.3L667.2 940.0L667.1 943.1L654.4 942.3ZM669.9 940.2L682.6 941.0L682.6 944.0L669.9 943.2ZM685.4 941.1L698.1 941.9L698.1 944.9L685.4 944.2ZM700.9 942.1L713.6 942.8L713.6 945.9L700.8 945.1ZM716.3 943.0L729.1 943.8L729.0 946.8L716.3 946.0ZM731.8 943.9L744.5 944.7L744.5 947.7L731.8 947.0ZM747.3 944.9L760.0 945.6L760.0 948.7L747.3 947.9ZM762.8 945.8L775.5 946.6L775.5 949.6L762.8 948.8ZM778.3 946.7L791.0 947.5L791.0 950.5L778.2 949.8ZM793.7 947.7L806.5 948.4L806.5 951.5L793.7 950.7ZM809.2 948.6L822.0 949.4L821.9 952.4L809.2 951.6ZM824.7 949.5L837.4 950.3L837.4 953.3L824.7 952.6ZM840.2 950.5L845.8 950.8L845.8 953.8L840.2 953.5ZM229.2 919.0L241.9 919.8L241.9 922.8L229.2 922.0ZM244.6 919.9L257.3 920.7L257.3 923.7L244.6 922.9ZM260.1 920.9L272.8 921.6L272.8 924.6L260.1 923.9ZM275.5 921.8L288.2 922.6L288.2 925.6L275.5 924.8ZM291.0 922.7L303.7 923.5L303.7 926.5L291.0 925.7ZM306.4 923.7L319.2 924.4L319.1 927.4L306.4 926.7ZM321.9 924.6L334.6 925.4L334.6 928.4L321.9 927.6ZM337.4 925.5L350.1 926.3L350.0 929.3L337.3 928.5ZM352.8 926.5L365.5 927.2L365.5 930.2L352.8 929.5ZM368.3 927.4L381.0 928.2L381.0 931.2L368.2 930.4ZM383.7 928.3L396.4 929.1L396.4 932.1L383.7 931.3ZM399.2 929.3L411.9 930.0L411.9 933.0L399.2 932.3ZM414.7 930.2L427.4 931.0L427.3 934.0L414.6 933.2ZM430.1 931.1L442.8 931.9L442.8 934.9L430.1 934.1ZM445.6 932.1L458.3 932.8L458.3 935.8L445.6 935.1ZM461.0 933.0L473.8 933.8L473.7 936.8L461.0 936.0ZM476.5 933.9L489.2 934.7L489.2 937.7L476.5 936.9ZM492.0 934.9L504.7 935.6L504.7 938.6L491.9 937.9ZM507.4 935.8L520.2 936.6L520.1 939.6L507.4 938.8ZM522.9 936.7L535.6 937.5L535.6 940.5L522.9 939.7ZM538.4 937.7L551.1 938.4L551.1 941.4L538.4 940.7ZM553.8 938.6L566.6 939.4L566.5 942.4L553.8 941.6ZM569.3 939.5L582.0 940.3L582.0 943.3L569.3 942.5ZM584.8 940.5L597.5 941.2L597.5 944.2L584.8 943.5ZM600.3 941.4L613.0 942.2L612.9 945.2L600.2 944.4ZM615.7 942.3L628.4 943.1L628.4 946.1L615.7 945.3ZM631.2 943.3L643.9 944.0L643.9 947.0L631.2 946.3ZM646.7 944.2L659.4 945.0L659.4 948.0L646.6 947.2ZM662.1 945.1L674.9 945.9L674.8 948.9L662.1 948.1ZM677.6 946.1L690.3 946.8L690.3 949.8L677.6 949.1ZM693.1 947.0L705.8 947.8L705.8 950.8L693.1 950.0ZM708.6 947.9L721.3 948.7L721.3 951.7L708.6 950.9ZM724.1 948.9L736.8 949.6L736.8 952.6L724.0 951.9ZM739.5 949.8L752.3 950.6L752.2 953.6L739.5 952.8ZM755.0 950.7L767.7 951.5L767.7 954.5L755.0 953.7ZM770.5 951.7L783.2 952.4L783.2 955.4L770.5 954.7ZM786.0 952.6L798.7 953.4L798.7 956.4L786.0 955.6ZM801.5 953.5L814.2 954.3L814.2 957.3L801.4 956.5ZM816.9 954.5L829.7 955.2L829.6 958.3L816.9 957.5ZM832.4 955.4L845.1 956.2L845.1 959.2L832.4 958.4ZM228.5 924.3L234.1 924.7L234.1 927.7L228.5 927.4ZM236.9 924.8L249.6 925.6L249.5 928.6L236.8 927.9ZM252.3 925.8L265.0 926.5L265.0 929.6L252.3 928.8ZM267.8 926.7L280.5 927.5L280.4 930.5L267.7 929.7ZM283.2 927.6L295.9 928.4L295.9 931.4L283.2 930.7ZM298.7 928.6L311.4 929.3L311.3 932.4L298.6 931.6ZM314.1 929.5L326.8 930.3L326.8 933.3L314.1 932.5ZM329.6 930.4L342.3 931.2L342.3 934.2L329.6 933.5ZM345.0 931.4L357.7 932.1L357.7 935.2L345.0 934.4ZM360.5 932.3L373.2 933.1L373.2 936.1L360.5 935.3ZM376.0 933.2L388.7 934.0L388.6 937.0L375.9 936.3ZM391.4 934.2L404.1 934.9L404.1 938.0L391.4 937.2ZM406.9 935.1L419.6 935.9L419.6 938.9L406.9 938.1ZM422.3 936.0L435.1 936.8L435.0 939.8L422.3 939.1ZM437.8 937.0L450.5 937.7L450.5 940.8L437.8 940.0ZM453.3 937.9L466.0 938.7L466.0 941.7L453.2 940.9ZM468.7 938.8L481.4 939.6L481.4 942.6L468.7 941.9ZM484.2 939.8L496.9 940.5L496.9 943.6L484.2 942.8ZM499.7 940.7L512.4 941.5L512.4 944.5L499.6 943.7ZM515.1 941.6L527.8 942.4L527.8 945.4L515.1 944.7ZM530.6 942.6L543.3 943.3L543.3 946.4L530.6 945.6ZM546.1 943.5L558.8 944.3L558.8 947.3L546.0 946.5ZM561.5 944.4L574.3 945.2L574.2 948.2L561.5 947.5ZM577.0 945.4L589.7 946.1L589.7 949.2L577.0 948.4ZM592.5 946.3L605.2 947.1L605.2 950.1L592.5 949.3ZM607.9 947.2L620.7 948.0L620.6 951.0L607.9 950.3ZM623.4 948.2L636.1 948.9L636.1 952.0L623.4 951.2ZM638.9 949.1L651.6 949.9L651.6 952.9L638.9 952.1ZM654.4 950.0L667.1 950.8L667.1 953.8L654.4 953.1ZM669.8 951.0L682.6 951.7L682.5 954.8L669.8 954.0ZM685.3 951.9L698.0 952.7L698.0 955.7L685.3 954.9ZM700.8 952.8L713.5 953.6L713.5 956.6L700.8 955.9ZM716.3 953.8L729.0 954.5L729.0 957.6L716.3 956.8ZM731.8 954.7L744.5 955.5L744.5 958.5L731.7 957.7ZM747.2 955.6L760.0 956.4L759.9 959.4L747.2 958.7ZM762.7 956.6L775.4 957.4L775.4 960.4L762.7 959.6ZM778.2 957.5L790.9 958.3L790.9 961.3L778.2 960.5ZM793.7 958.5L806.4 959.2L806.4 962.2L793.7 961.5ZM809.2 959.4L821.9 960.2L821.9 963.2L809.1 962.4ZM824.6 960.3L837.4 961.1L837.4 964.1L824.6 963.3ZM840.1 961.3L845.7 961.6L845.7 964.6L840.1 964.3ZM229.1 929.8L241.8 930.5L241.7 933.5L229.0 932.8ZM244.5 930.7L257.2 931.5L257.2 934.5L244.5 933.7ZM260.0 931.6L272.7 932.4L272.7 935.4L260.0 934.6ZM275.4 932.6L288.1 933.3L288.1 936.3L275.4 935.6ZM290.9 933.5L303.6 934.3L303.6 937.3L290.9 936.5ZM306.3 934.4L319.1 935.2L319.0 938.2L306.3 937.4ZM321.8 935.4L334.5 936.1L334.5 939.1L321.8 938.4ZM337.3 936.3L350.0 937.1L349.9 940.1L337.2 939.3ZM352.7 937.2L365.4 938.0L365.4 941.0L352.7 940.2ZM368.2 938.2L380.9 938.9L380.9 941.9L368.2 941.2ZM383.6 939.1L396.4 939.9L396.3 942.9L383.6 942.1ZM399.1 940.0L411.8 940.8L411.8 943.8L399.1 943.0ZM414.6 941.0L427.3 941.7L427.3 944.7L414.5 944.0ZM430.0 941.9L442.7 942.7L442.7 945.7L430.0 944.9ZM445.5 942.8L458.2 943.6L458.2 946.6L445.5 945.8ZM461.0 943.8L473.7 944.5L473.6 947.5L460.9 946.8ZM476.4 944.7L489.1 945.5L489.1 948.5L476.4 947.7ZM491.9 945.6L504.6 946.4L504.6 949.4L491.9 948.6ZM507.4 946.6L520.1 947.3L520.0 950.3L507.3 949.6ZM522.8 947.5L535.5 948.3L535.5 951.3L522.8 950.5ZM538.3 948.4L551.0 949.2L551.0 952.2L538.3 951.4ZM553.8 949.4L566.5 950.1L566.5 953.1L553.7 952.4ZM569.2 950.3L581.9 951.1L581.9 954.1L569.2 953.3ZM584.7 951.2L597.4 952.0L597.4 955.0L584.7 954.2ZM600.2 952.2L612.9 952.9L612.9 955.9L600.2 955.2ZM615.6 953.1L628.4 953.9L628.3 956.9L615.6 956.1ZM631.1 954.0L643.8 954.8L643.8 957.8L631.1 957.0ZM646.6 955.0L659.3 955.7L659.3 958.7L646.6 958.0ZM662.1 955.9L674.8 956.7L674.8 959.7L662.1 958.9ZM677.5 956.8L690.3 957.6L690.3 960.6L677.5 959.8ZM693.0 957.8L705.7 958.5L705.7 961.6L693.0 960.8ZM708.5 958.7L721.2 959.5L721.2 962.5L708.5 961.7ZM724.0 959.6L736.7 960.4L736.7 963.4L724.0 962.7ZM739.5 960.6L752.2 961.3L752.2 964.4L739.4 963.6ZM754.9 961.5L767.7 962.3L767.7 965.3L754.9 964.5ZM770.4 962.4L783.2 963.2L783.1 966.2L770.4 965.5ZM785.9 963.4L798.6 964.1L798.6 967.2L785.9 966.4ZM801.4 964.3L814.1 965.1L814.1 968.1L801.4 967.3ZM816.9 965.2L829.6 966.0L829.6 969.0L816.9 968.3ZM832.4 966.2L845.1 966.9L845.1 970.0L832.3 969.2Z" fill="#8c9e84"/>
<polygon points="229.2,874.2 265.9,876.4 265.9,882.1 229.2,879.9" fill="#83957b" stroke="none" stroke-width="1.65" />
<polyline points="229.2,879.9 265.9,882.1" fill="none" stroke="#000" stroke-width="1.2" />
<polygon points="332.4,880.4 374.9,882.9 374.9,888.6 332.4,886.1" fill="#83957b" stroke="none" stroke-width="1.65" />
<polyline points="332.4,886.1 374.9,888.6" fill="none" stroke="#000" stroke-width="1.2" />
<polygon points="441.5,887.0 483.5,889.5 483.4,895.2 441.4,892.7" fill="#83957b" stroke="none" stroke-width="1.65" />
<polyline points="441.4,892.7 483.4,895.2" fill="none" stroke="#000" stroke-width="1.2" />
<polygon points="549.0,893.4 730.8,904.4 730.7,910.1 549.0,899.1" fill="#83957b" stroke="none" stroke-width="1.65" />
<polyline points="549.0,899.1 730.7,910.1" fill="none" stroke="#000" stroke-width="1.2" />
<polygon points="810.9,909.2 846.5,911.4 846.4,917.1 810.9,914.9" fill="#83957b" stroke="none" stroke-width="1.65" />
<polygon points="731.4,796.7 735.9,796.9 734.9,964.5 730.4,964.2" fill="#aec6a4" stroke="#000" stroke-width="1.1" />
<polygon points="735.9,796.9 810.0,801.4 809.6,873.5 735.5,869.0" fill="#999999" stroke="#000" stroke-width="1.2" />
<polygon points="735.5,869.0 809.6,873.5 809.1,969.0 734.9,964.5" fill="#86aeca" stroke="#000" stroke-width="1.2" />
<polygon points="267.9,601.3 270.5,601.0 269.5,708.4 266.9,708.0" fill="#566150" stroke="#000" stroke-width="1.0" />
<polygon points="270.5,601.0 332.2,604.7 331.2,712.1 269.5,708.4" fill="#a87a0a" stroke="#000" stroke-width="1.7" />
<polygon points="275.5,605.9 327.6,609.0 327.3,637.1 275.2,634.0" fill="#aec6a4" stroke="#000" stroke-width="1.6" />
<polygon points="275.2,638.6 298.3,640.0 297.7,704.6 274.6,703.2" fill="#aec6a4" stroke="#000" stroke-width="1.6" />
<polygon points="303.4,640.3 327.3,641.7 326.7,706.4 302.8,704.9" fill="#aec6a4" stroke="#000" stroke-width="1.6" />
<polygon points="311.4,608.0 322.4,608.7 322.1,636.8 311.2,636.1" fill="#fff" stroke="#000" stroke-width="1.0" />
<polygon points="311.1,640.7 322.1,641.4 321.9,665.3 310.8,671.7" fill="#fff" stroke="#000" stroke-width="1.0" />
<polygon points="310.8,671.7 321.9,665.3 327.1,663.6 327.1,666.6 310.8,675.6" fill="#aec6a4" stroke="#000" stroke-width="1.0" />
<polygon points="276.2,606.7 278.6,606.8 278.3,633.4 275.9,633.2" fill="#b8860f" stroke="none" stroke-width="1.65" />
<polyline points="278.8,606.6 278.5,633.6" fill="none" stroke="#000" stroke-width="0.9" />
<polyline points="275.2,633.7 327.3,636.8" fill="none" stroke="#000" stroke-width="2.4" />
<polyline points="275.5,605.9 327.6,609.0" fill="none" stroke="#000" stroke-width="2.0" />
<polygon points="275.9,639.4 278.3,639.6 277.7,702.6 275.3,702.5" fill="#b8860f" stroke="none" stroke-width="1.65" />
<polyline points="278.5,639.4 277.9,702.8" fill="none" stroke="#000" stroke-width="0.9" />
<polyline points="274.6,702.9 297.7,704.3" fill="none" stroke="#000" stroke-width="2.4" />
<polyline points="275.2,638.6 298.3,640.0" fill="none" stroke="#000" stroke-width="2.0" />
<polygon points="304.1,641.1 306.5,641.2 305.9,704.3 303.5,704.2" fill="#b8860f" stroke="none" stroke-width="1.65" />
<polyline points="306.7,641.1 306.1,704.5" fill="none" stroke="#000" stroke-width="0.9" />
<polyline points="302.8,704.6 326.7,706.1" fill="none" stroke="#000" stroke-width="2.4" />
<polyline points="303.4,640.3 327.3,641.7" fill="none" stroke="#000" stroke-width="2.0" />
<polygon points="376.7,607.8 379.3,607.5 378.4,715.0 375.8,714.5" fill="#566150" stroke="#000" stroke-width="1.0" />
<polygon points="379.3,607.5 441.0,611.2 440.2,718.7 378.4,715.0" fill="#a87a0a" stroke="#000" stroke-width="1.7" />
<polygon points="384.3,612.4 436.4,615.5 436.2,643.6 384.0,640.5" fill="#aec6a4" stroke="#000" stroke-width="1.6" />
<polygon points="384.0,645.1 407.2,646.5 406.6,711.2 383.4,709.8" fill="#aec6a4" stroke="#000" stroke-width="1.6" />
<polygon points="412.3,646.8 436.1,648.2 435.6,712.9 411.7,711.5" fill="#aec6a4" stroke="#000" stroke-width="1.6" />
<polygon points="385.0,613.2 387.4,613.3 387.1,639.9 384.7,639.7" fill="#b8860f" stroke="none" stroke-width="1.65" />
<polyline points="387.6,613.2 387.3,640.1" fill="none" stroke="#000" stroke-width="0.9" />
<polyline points="384.0,640.2 436.2,643.3" fill="none" stroke="#000" stroke-width="2.4" />
<polyline points="384.3,612.4 436.4,615.5" fill="none" stroke="#000" stroke-width="2.0" />
<polygon points="384.7,645.9 387.1,646.1 386.5,709.2 384.2,709.0" fill="#b8860f" stroke="none" stroke-width="1.65" />
<polyline points="387.3,645.9 386.7,709.4" fill="none" stroke="#000" stroke-width="0.9" />
<polyline points="383.4,709.5 406.6,710.9" fill="none" stroke="#000" stroke-width="2.4" />
<polyline points="384.0,645.1 407.2,646.5" fill="none" stroke="#000" stroke-width="2.0" />
<polygon points="413.0,647.6 415.4,647.8 414.8,710.9 412.4,710.7" fill="#b8860f" stroke="none" stroke-width="1.65" />
<polyline points="415.6,647.6 415.0,711.1" fill="none" stroke="#000" stroke-width="0.9" />
<polyline points="411.7,711.2 435.6,712.6" fill="none" stroke="#000" stroke-width="2.4" />
<polyline points="412.3,646.8 436.1,648.2" fill="none" stroke="#000" stroke-width="2.0" />
<polygon points="637.4,623.4 640.0,623.1 639.3,730.6 636.7,730.2" fill="#566150" stroke="#000" stroke-width="1.0" />
<polygon points="640.0,623.1 701.8,626.7 701.1,734.3 639.3,730.6" fill="#a87a0a" stroke="#000" stroke-width="1.7" />
<polygon points="645.0,627.9 697.2,631.1 697.0,659.2 644.8,656.1" fill="#999999" stroke="#000" stroke-width="1.6" />
<polygon points="644.8,660.7 668.0,662.1 667.5,726.8 644.3,725.4" fill="#999999" stroke="#000" stroke-width="1.6" />
<polygon points="673.1,662.4 697.0,663.8 696.5,728.5 672.6,727.1" fill="#999999" stroke="#000" stroke-width="1.6" />
<polygon points="645.7,628.8 648.1,628.9 647.9,655.5 645.5,655.3" fill="#b8860f" stroke="none" stroke-width="1.65" />
<polyline points="648.3,628.7 648.1,655.7" fill="none" stroke="#000" stroke-width="0.9" />
<polyline points="644.8,655.8 697.0,658.9" fill="none" stroke="#000" stroke-width="2.4" />
<polyline points="645.0,627.9 697.2,631.1" fill="none" stroke="#000" stroke-width="2.0" />
<polygon points="645.5,661.5 647.9,661.7 647.4,724.8 645.0,724.7" fill="#b8860f" stroke="none" stroke-width="1.65" />
<polyline points="648.1,661.5 647.6,725.0" fill="none" stroke="#000" stroke-width="0.9" />
<polyline points="644.3,725.1 667.5,726.5" fill="none" stroke="#000" stroke-width="2.4" />
<polyline points="644.8,660.7 668.0,662.1" fill="none" stroke="#000" stroke-width="2.0" />
<polygon points="673.8,663.2 676.2,663.4 675.7,726.5 673.3,726.4" fill="#b8860f" stroke="none" stroke-width="1.65" />
<polyline points="676.4,663.2 675.9,726.7" fill="none" stroke="#000" stroke-width="0.9" />
<polyline points="672.6,726.8 696.5,728.2" fill="none" stroke="#000" stroke-width="2.4" />
<polyline points="673.1,662.4 697.0,663.8" fill="none" stroke="#000" stroke-width="2.0" />
<polygon points="746.9,630.5 749.5,630.2 748.8,737.8 746.2,737.3" fill="#566150" stroke="#000" stroke-width="1.0" />
<polygon points="749.5,630.2 811.3,633.9 810.6,741.5 748.8,737.8" fill="#a87a0a" stroke="#000" stroke-width="1.7" />
<polygon points="754.4,635.1 806.6,638.2 806.5,666.4 754.3,663.2" fill="#999999" stroke="#000" stroke-width="1.6" />
<polygon points="754.2,667.8 777.4,669.2 777.1,734.0 753.8,732.6" fill="#999999" stroke="#000" stroke-width="1.6" />
<polygon points="782.5,669.5 806.4,671.0 806.1,735.7 782.2,734.3" fill="#999999" stroke="#000" stroke-width="1.6" />
<polygon points="755.1,635.9 757.5,636.1 757.4,662.6 755.0,662.5" fill="#b8860f" stroke="none" stroke-width="1.65" />
<polyline points="757.7,635.9 757.6,662.8" fill="none" stroke="#000" stroke-width="0.9" />
<polyline points="754.3,662.9 806.5,666.1" fill="none" stroke="#000" stroke-width="2.4" />
<polyline points="754.4,635.1 806.6,638.2" fill="none" stroke="#000" stroke-width="2.0" />
<polygon points="754.9,668.7 757.3,668.8 757.0,732.0 754.6,731.8" fill="#b8860f" stroke="none" stroke-width="1.65" />
<polyline points="757.5,668.6 757.2,732.2" fill="none" stroke="#000" stroke-width="0.9" />
<polyline points="753.8,732.3 777.1,733.7" fill="none" stroke="#000" stroke-width="2.4" />
<polyline points="754.2,667.8 777.4,669.2" fill="none" stroke="#000" stroke-width="2.0" />
<polygon points="783.2,670.4 785.6,670.5 785.3,733.7 782.9,733.5" fill="#b8860f" stroke="none" stroke-width="1.65" />
<polyline points="785.8,670.3 785.5,733.9" fill="none" stroke="#000" stroke-width="0.9" />
<polyline points="782.2,734.0 806.1,735.4" fill="none" stroke="#000" stroke-width="2.4" />
<polyline points="782.5,669.5 806.4,671.0" fill="none" stroke="#000" stroke-width="2.0" />
<polygon points="266.3,769.2 268.9,768.9 267.9,876.6 265.3,876.1" fill="#566150" stroke="#000" stroke-width="1.0" />
<polygon points="268.9,768.9 330.7,772.6 329.7,880.3 267.9,876.6" fill="#a87a0a" stroke="#000" stroke-width="1.7" />
<polygon points="273.9,773.8 326.1,776.9 325.8,805.1 273.6,802.0" fill="#aec6a4" stroke="#000" stroke-width="1.6" />
<polygon points="273.6,806.6 296.8,808.0 296.2,872.8 273.0,871.4" fill="#aec6a4" stroke="#000" stroke-width="1.6" />
<polygon points="301.9,808.3 325.8,809.7 325.2,874.5 301.3,873.1" fill="#aec6a4" stroke="#000" stroke-width="1.6" />
<polygon points="309.9,775.9 320.9,776.6 320.6,804.8 309.6,804.1" fill="#fff" stroke="#000" stroke-width="1.0" />
<polygon points="309.6,808.7 320.6,809.4 320.4,833.4 309.3,839.7" fill="#fff" stroke="#000" stroke-width="1.0" />
<polygon points="309.3,839.7 320.4,833.4 325.6,831.7 325.5,834.7 309.3,843.7" fill="#aec6a4" stroke="#000" stroke-width="1.0" />
<polygon points="274.6,774.6 277.0,774.8 276.7,801.4 274.3,801.2" fill="#b8860f" stroke="none" stroke-width="1.65" />
<polyline points="277.2,774.6 276.9,801.6" fill="none" stroke="#000" stroke-width="0.9" />
<polyline points="273.6,801.7 325.8,804.8" fill="none" stroke="#000" stroke-width="2.4" />
<polyline points="273.9,773.8 326.1,776.9" fill="none" stroke="#000" stroke-width="2.0" />
<polygon points="274.3,807.4 276.7,807.5 276.1,870.8 273.7,870.6" fill="#b8860f" stroke="none" stroke-width="1.65" />
<polyline points="276.9,807.4 276.3,871.0" fill="none" stroke="#000" stroke-width="0.9" />
<polyline points="273.0,871.1 296.2,872.5" fill="none" stroke="#000" stroke-width="2.4" />
<polyline points="273.6,806.6 296.8,808.0" fill="none" stroke="#000" stroke-width="2.0" />
<polygon points="302.6,809.1 305.0,809.3 304.4,872.5 302.0,872.3" fill="#b8860f" stroke="none" stroke-width="1.65" />
<polyline points="305.2,809.1 304.6,872.7" fill="none" stroke="#000" stroke-width="0.9" />
<polyline points="301.3,872.8 325.2,874.2" fill="none" stroke="#000" stroke-width="2.4" />
<polyline points="301.9,808.3 325.8,809.7" fill="none" stroke="#000" stroke-width="2.0" />
<polygon points="375.3,775.8 377.9,775.4 376.9,883.2 374.3,882.7" fill="#566150" stroke="#000" stroke-width="1.0" />
<polygon points="377.9,775.4 439.7,779.1 438.8,886.9 376.9,883.2" fill="#a87a0a" stroke="#000" stroke-width="1.7" />
<polygon points="382.8,780.3 435.0,783.5 434.8,811.7 382.6,808.5" fill="#aec6a4" stroke="#000" stroke-width="1.6" />
<polygon points="382.6,813.1 405.7,814.5 405.2,879.4 382.0,878.0" fill="#aec6a4" stroke="#000" stroke-width="1.6" />
<polygon points="410.8,814.8 434.7,816.3 434.2,881.1 410.3,879.7" fill="#aec6a4" stroke="#000" stroke-width="1.6" />
<polygon points="382.5,878.0 405.2,873.9 405.2,879.4" fill="#86aeca" stroke="#000" stroke-width="1.0" />
<polygon points="410.4,866.1 434.4,860.6 434.2,881.1 410.3,879.7" fill="#86aeca" stroke="#000" stroke-width="1.0" />
<polygon points="383.5,781.2 385.9,781.3 385.7,807.9 383.3,807.8" fill="#b8860f" stroke="none" stroke-width="1.65" />
<polyline points="386.1,781.1 385.9,808.1" fill="none" stroke="#000" stroke-width="0.9" />
<polyline points="382.6,808.2 434.8,811.4" fill="none" stroke="#000" stroke-width="2.4" />
<polyline points="382.8,780.3 435.0,783.5" fill="none" stroke="#000" stroke-width="2.0" />
<polygon points="383.2,814.0 385.6,814.1 385.1,877.3 382.7,877.2" fill="#b8860f" stroke="none" stroke-width="1.65" />
<polyline points="385.8,813.9 385.3,877.6" fill="none" stroke="#000" stroke-width="0.9" />
<polyline points="382.0,877.7 405.2,879.1" fill="none" stroke="#000" stroke-width="2.4" />
<polyline points="382.6,813.1 405.7,814.5" fill="none" stroke="#000" stroke-width="2.0" />
<polygon points="411.5,815.7 413.9,815.8 413.4,879.0 411.0,878.9" fill="#b8860f" stroke="none" stroke-width="1.65" />
<polyline points="414.1,815.6 413.6,879.3" fill="none" stroke="#000" stroke-width="0.9" />
<polyline points="410.3,879.4 434.2,880.8" fill="none" stroke="#000" stroke-width="2.4" />
<polyline points="410.8,814.8 434.7,816.3" fill="none" stroke="#000" stroke-width="2.0" />
<polygon points="483.2,782.2 485.8,781.9 485.0,889.7 482.4,889.2" fill="#566150" stroke="#000" stroke-width="1.0" />
<polygon points="485.8,781.9 547.6,785.6 546.8,893.4 485.0,889.7" fill="#a87a0a" stroke="#000" stroke-width="1.7" />
<polygon points="490.8,786.8 543.0,789.9 542.8,818.1 490.6,815.0" fill="#999999" stroke="#000" stroke-width="1.6" />
<polygon points="490.6,819.6 513.8,821.0 513.3,885.9 490.0,884.5" fill="#999999" stroke="#000" stroke-width="1.6" />
<polygon points="518.9,821.3 542.8,822.8 542.3,887.6 518.4,886.2" fill="#999999" stroke="#000" stroke-width="1.6" />
<polygon points="490.3,854.2 513.5,855.6 513.3,885.9 490.0,884.5" fill="#86aeca" stroke="#000" stroke-width="1.0" />
<polygon points="518.6,855.9 542.5,857.4 542.3,887.6 518.4,886.2" fill="#86aeca" stroke="#000" stroke-width="1.0" />
<polygon points="491.5,787.6 493.9,787.8 493.7,814.4 491.3,814.3" fill="#b8860f" stroke="none" stroke-width="1.65" />
<polyline points="494.1,787.6 493.9,814.6" fill="none" stroke="#000" stroke-width="0.9" />
<polyline points="490.6,814.7 542.8,817.8" fill="none" stroke="#000" stroke-width="2.4" />
<polyline points="490.8,786.8 543.0,789.9" fill="none" stroke="#000" stroke-width="2.0" />
<polygon points="491.2,820.5 493.6,820.6 493.1,883.9 490.7,883.7" fill="#b8860f" stroke="none" stroke-width="1.65" />
<polyline points="493.8,820.4 493.3,884.1" fill="none" stroke="#000" stroke-width="0.9" />
<polyline points="490.0,884.2 513.3,885.6" fill="none" stroke="#000" stroke-width="2.4" />
<polyline points="490.6,819.6 513.8,821.0" fill="none" stroke="#000" stroke-width="2.0" />
<polygon points="519.6,822.2 522.0,822.3 521.5,885.6 519.1,885.4" fill="#b8860f" stroke="none" stroke-width="1.65" />
<polyline points="522.2,822.1 521.7,885.8" fill="none" stroke="#000" stroke-width="0.9" />
<polyline points="518.4,885.9 542.3,887.3" fill="none" stroke="#000" stroke-width="2.4" />
<polyline points="518.9,821.3 542.8,822.8" fill="none" stroke="#000" stroke-width="2.0" />
<polygon points="227.7,933.9 846.4,971.2 846.3,998.0 227.4,960.6" fill="#66879e" stroke="#000" stroke-width="1.65" />
<polygon points="185.2,580.0 538.4,419.8 541.0,424.0 539.6,436.0 214.0,583.8 199.5,585.8" fill="#6b6b6b" stroke="#000" stroke-width="1.5" />
<polygon points="199.0,574.2 538.4,419.8 540.0,422.3 200.5,577.6" fill="#8f8f8f" stroke="#000" stroke-width="1.1" />
<polygon points="541.0,423.5 771.5,331.0 1099.2,527.5 867.5,620.5" fill="#9e9e9e" stroke="#000" stroke-width="1.5" />
<polygon points="563.7,417.0 567.9,415.3 891.9,610.7 887.7,612.4" fill="#979797" stroke="#000" stroke-width="1.7" />
<polygon points="583.0,409.3 587.1,407.6 911.2,603.0 907.0,604.6" fill="#979797" stroke="#000" stroke-width="1.7" />
<polygon points="602.2,401.6 606.3,399.9 930.5,595.2 926.4,596.9" fill="#979797" stroke="#000" stroke-width="1.7" />
<polygon points="621.4,393.9 625.5,392.2 949.8,587.5 945.7,589.1" fill="#979797" stroke="#000" stroke-width="1.7" />
<polygon points="640.6,386.2 644.7,384.5 969.1,579.7 965.0,581.4" fill="#979797" stroke="#000" stroke-width="1.7" />
<polygon points="659.8,378.5 663.9,376.8 988.4,572.0 984.3,573.6" fill="#979797" stroke="#000" stroke-width="1.7" />
<polygon points="679.0,370.7 683.1,369.1 1007.8,564.2 1003.6,565.9" fill="#979797" stroke="#000" stroke-width="1.7" />
<polygon points="698.2,363.0 702.4,361.4 1027.1,556.5 1022.9,558.1" fill="#979797" stroke="#000" stroke-width="1.7" />
<polygon points="717.4,355.3 721.6,353.7 1046.4,548.7 1042.2,550.4" fill="#979797" stroke="#000" stroke-width="1.7" />
<polygon points="736.6,347.6 740.8,346.0 1065.7,541.0 1061.5,542.6" fill="#979797" stroke="#000" stroke-width="1.7" />
<polygon points="755.8,339.9 760.0,338.2 1085.0,533.2 1080.8,534.9" fill="#979797" stroke="#000" stroke-width="1.7" />
<polygon points="541.0,423.5 545.6,421.6 872.1,618.6 867.5,620.5" fill="#989898" stroke="#000" stroke-width="1.4" />
<polygon points="767.4,332.7 771.5,331.0 1099.2,527.5 1095.0,529.2" fill="#989898" stroke="#000" stroke-width="1.4" />
<polygon points="536.5,418.5 770.0,327.8 773.5,331.2 542.0,424.5 538.0,423.0" fill="#8e8e8e" stroke="#000" stroke-width="1.3" />
<polyline points="539.0,421.5 771.5,330.0" fill="none" stroke="#000" stroke-width="0.9" />
<polygon points="541.0,423.5 867.5,620.5 862.0,628.5 539.6,436.2" fill="#6b6b6b" stroke="#000" stroke-width="1.4" />
<defs><linearGradient id="gut" gradientUnits="userSpaceOnUse" x1="980" y1="575.400" x2="983.500" y2="584.200"><stop offset="0" stop-color="#a2a2a2"/><stop offset="0.500" stop-color="#989898"/><stop offset="0.560" stop-color="#5a5a5a"/><stop offset="1" stop-color="#4c4c4c"/></linearGradient></defs>
<path d="M863 621.500 L1100 529.500 L1112.300 533 C1111.500 537.500 1109 540.200 1105.500 541.500 L875.500 630 C869 631 864.500 627.500 863 621.500Z" fill="url(#gut)" stroke="#000" stroke-width="1.500"/>
<polyline points="866.5,625.3 1101.5,531.9 1111.5,533.2" fill="none" stroke="#000" stroke-width="1.3" />
<defs><linearGradient id="pipe" x1="0" y1="0" x2="1" y2="0"><stop offset="0" stop-color="#5e5e5e"/><stop offset="0.5" stop-color="#bdbdbd"/><stop offset="1" stop-color="#6a6a6a"/></linearGradient></defs>
<path d="M190 588.700 C190.500 593 192.500 596 197 601 C201 605.500 204 608 204 616.200 L214.400 615.100 C214.600 606 212 601.500 207.500 596.500 C204 592.500 201 590 199.900 587.100 Z" fill="url(#pipe)" stroke="#000" stroke-width="1.500"/>
<path d="M185.100 580.400 L199.200 574.300 L200.300 581 C199.800 585.500 197 588.200 193 588.300 C188.500 588.400 185.500 585 185.100 580.400Z" fill="#6e6e6e" stroke="#000" stroke-width="1.500"/>
<path d="M186 580.300 L199.800 580.800 M190.500 578.200 L198.600 574.800 L199.600 580.300 Z" fill="#9a9a9a" stroke="#000" stroke-width="1.100"/>
<polygon points="1612.0,697.5 1672.0,704.3 1672.0,708.0 1612.0,701.5" fill="#cf6f50" stroke="#000" stroke-width="1.1" />
<polygon points="1612.0,701.5 1672.0,708.0 1666.7,718.2 1612.0,713.8" fill="#c06446" stroke="#000" stroke-width="1.2" />
<polygon points="1505.0,921.3 1663.3,931.3 1676.0,927.0 1676.0,990.0 1505.0,980.0" fill="#86aeca" stroke="#000" stroke-width="1.2" />
<polygon points="1714.2,855.0 1725.0,855.0 1725.0,985.0 1714.2,985.0" fill="#aec6a4" stroke="#000" stroke-width="1.4" />
<path d="M1470.3 649.7L1730.0 531.5L1730.0 992.0L1466.7 977.5ZM1510.0 674.7L1572.5 678.7L1571.3 787.5L1508.7 783.3ZM1613.8 681.3L1670.8 684.7L1670.0 792.5L1613.0 789.2ZM1508.5 843.0L1674.7 852.8L1674.0 982.5L1507.5 972.5ZM1714.2 855.0L1730.0 856.0L1730.0 986.0L1714.2 985.0Z" fill="#83957b" fill-rule="evenodd" stroke="#000" stroke-width="1.500"/>
<polygon points="1510.0,674.7 1514.5,675.0 1513.2,781.8 1508.7,783.3" fill="#aec6a4" stroke="#000" stroke-width="1.1" />
<polygon points="1613.8,681.3 1617.5,681.6 1616.7,787.7 1613.0,789.2" fill="#aec6a4" stroke="#000" stroke-width="1.1" />
<polygon points="1508.5,843.0 1513.0,843.3 1512.0,971.0 1507.5,972.5" fill="#aec6a4" stroke="#000" stroke-width="1.1" />
<polyline points="1508.7,783.3 1571.3,787.5" fill="none" stroke="#000" stroke-width="2.2" />
<polyline points="1613.0,789.2 1670.0,792.5" fill="none" stroke="#000" stroke-width="2.2" />
<polyline points="1507.5,972.5 1674.0,982.5" fill="none" stroke="#000" stroke-width="2.2" />
<polygon points="1465.0,977.5 1730.0,991.5 1730.0,1025.0 1465.0,1009.7" fill="#0b0d0a" stroke="#000" stroke-width="1.2" />
<path d="M1466.3 978.8L1478.5 979.4L1478.5 982.4L1466.3 981.8ZM1481.2 979.5L1493.4 980.2L1493.4 983.2L1481.2 982.6ZM1496.1 980.3L1508.4 981.0L1508.4 984.0L1496.1 983.3ZM1511.1 981.1L1523.4 981.8L1523.4 984.8L1511.1 984.1ZM1526.1 981.9L1538.5 982.6L1538.5 985.6L1526.1 985.0ZM1541.3 982.7L1553.7 983.4L1553.7 986.4L1541.3 985.8ZM1556.4 983.5L1569.0 984.2L1569.0 987.2L1556.4 986.6ZM1571.7 984.3L1584.3 985.0L1584.3 988.1L1571.7 987.4ZM1587.0 985.1L1599.7 985.8L1599.7 988.9L1587.0 988.2ZM1602.4 986.0L1615.1 986.6L1615.1 989.7L1602.4 989.0ZM1617.9 986.8L1630.6 987.5L1630.6 990.5L1617.9 989.9ZM1633.4 987.6L1646.2 988.3L1646.2 991.4L1633.4 990.7ZM1649.1 988.4L1661.9 989.1L1661.9 992.2L1649.1 991.5ZM1664.8 989.3L1677.7 990.0L1677.7 993.1L1664.8 992.4ZM1680.5 990.1L1693.5 990.8L1693.5 993.9L1680.5 993.2ZM1696.3 990.9L1709.4 991.6L1709.4 994.8L1696.3 994.1ZM1712.3 991.8L1725.4 992.5L1725.4 995.6L1712.3 994.9ZM1465.7 984.1L1471.1 984.4L1471.1 987.4L1465.7 987.1ZM1473.7 984.5L1485.9 985.2L1485.9 988.2L1473.7 987.5ZM1488.6 985.3L1500.9 986.0L1500.9 989.0L1488.6 988.3ZM1503.6 986.1L1515.9 986.8L1515.9 989.8L1503.6 989.1ZM1518.6 986.9L1531.0 987.6L1531.0 990.6L1518.6 990.0ZM1533.7 987.7L1546.1 988.4L1546.1 991.5L1533.7 990.8ZM1548.8 988.6L1561.3 989.2L1561.3 992.3L1548.8 991.6ZM1564.1 989.4L1576.6 990.1L1576.6 993.1L1564.1 992.4ZM1579.4 990.2L1592.0 990.9L1592.0 993.9L1579.4 993.3ZM1594.7 991.0L1607.4 991.7L1607.4 994.8L1594.7 994.1ZM1610.2 991.9L1622.9 992.5L1622.9 995.6L1610.2 994.9ZM1625.7 992.7L1638.4 993.4L1638.4 996.5L1625.7 995.8ZM1641.2 993.5L1654.1 994.2L1654.1 997.3L1641.2 996.6ZM1656.9 994.4L1669.8 995.1L1669.8 998.2L1656.9 997.5ZM1672.6 995.2L1685.6 995.9L1685.6 999.0L1672.6 998.3ZM1688.4 996.1L1701.4 996.8L1701.4 999.9L1688.4 999.2ZM1704.3 996.9L1717.4 997.6L1717.4 1000.8L1704.3 1000.0ZM1720.2 997.8L1729.2 998.3L1729.2 1001.4L1720.2 1000.9ZM1466.3 989.5L1478.5 990.2L1478.5 993.2L1466.3 992.5ZM1481.2 990.3L1493.4 991.0L1493.4 994.0L1481.2 993.3ZM1496.1 991.1L1508.4 991.8L1508.4 994.8L1496.1 994.1ZM1511.1 991.9L1523.4 992.6L1523.4 995.6L1511.1 995.0ZM1526.1 992.8L1538.5 993.4L1538.5 996.5L1526.1 995.8ZM1541.3 993.6L1553.7 994.3L1553.7 997.3L1541.3 996.6ZM1556.4 994.4L1569.0 995.1L1569.0 998.1L1556.4 997.5ZM1571.7 995.2L1584.3 995.9L1584.3 999.0L1571.7 998.3ZM1587.0 996.1L1599.7 996.8L1599.7 999.8L1587.0 999.1ZM1602.4 996.9L1615.1 997.6L1615.1 1000.7L1602.4 1000.0ZM1617.9 997.8L1630.6 998.5L1630.6 1001.5L1617.9 1000.8ZM1633.4 998.6L1646.2 999.3L1646.2 1002.4L1633.4 1001.7ZM1649.1 999.5L1661.9 1000.2L1661.9 1003.3L1649.1 1002.6ZM1664.8 1000.3L1677.7 1001.0L1677.7 1004.1L1664.8 1003.4ZM1680.5 1001.2L1693.5 1001.9L1693.5 1005.0L1680.5 1004.3ZM1696.3 1002.1L1709.4 1002.8L1709.4 1005.9L1696.3 1005.2ZM1712.3 1002.9L1725.4 1003.6L1725.4 1006.8L1712.3 1006.0ZM1465.7 994.8L1471.1 995.1L1471.1 998.1L1465.7 997.8ZM1473.7 995.3L1485.9 995.9L1485.9 999.0L1473.7 998.3ZM1488.6 996.1L1500.9 996.8L1500.9 999.8L1488.6 999.1ZM1503.6 996.9L1515.9 997.6L1515.9 1000.6L1503.6 999.9ZM1518.6 997.8L1531.0 998.4L1531.0 1001.5L1518.6 1000.8ZM1533.7 998.6L1546.1 999.3L1546.1 1002.3L1533.7 1001.6ZM1548.8 999.4L1561.3 1000.1L1561.3 1003.2L1548.8 1002.5ZM1564.1 1000.3L1576.6 1001.0L1576.6 1004.0L1564.1 1003.3ZM1579.4 1001.1L1592.0 1001.8L1592.0 1004.9L1579.4 1004.2ZM1594.7 1002.0L1607.4 1002.7L1607.4 1005.7L1594.7 1005.0ZM1610.2 1002.8L1622.9 1003.5L1622.9 1006.6L1610.2 1005.9ZM1625.7 1003.7L1638.4 1004.4L1638.4 1007.5L1625.7 1006.8ZM1641.2 1004.6L1654.1 1005.3L1654.1 1008.4L1641.2 1007.6ZM1656.9 1005.4L1669.8 1006.1L1669.8 1009.2L1656.9 1008.5ZM1672.6 1006.3L1685.6 1007.0L1685.6 1010.1L1672.6 1009.4ZM1688.4 1007.2L1701.4 1007.9L1701.4 1011.0L1688.4 1010.3ZM1704.3 1008.1L1717.4 1008.8L1717.4 1011.9L1704.3 1011.2ZM1720.2 1008.9L1729.2 1009.4L1729.2 1012.6L1720.2 1012.1ZM1466.3 1000.2L1478.5 1000.9L1478.5 1003.9L1466.3 1003.2ZM1481.2 1001.1L1493.4 1001.7L1493.4 1004.8L1481.2 1004.1ZM1496.1 1001.9L1508.4 1002.6L1508.4 1005.6L1496.1 1004.9ZM1511.1 1002.7L1523.4 1003.4L1523.4 1006.5L1511.1 1005.8ZM1526.1 1003.6L1538.5 1004.3L1538.5 1007.3L1526.1 1006.6ZM1541.3 1004.4L1553.7 1005.1L1553.7 1008.2L1541.3 1007.5ZM1556.4 1005.3L1569.0 1006.0L1569.0 1009.1L1556.4 1008.3ZM1571.7 1006.2L1584.3 1006.9L1584.3 1009.9L1571.7 1009.2ZM1587.0 1007.0L1599.7 1007.7L1599.7 1010.8L1587.0 1010.1ZM1602.4 1007.9L1615.1 1008.6L1615.1 1011.7L1602.4 1011.0ZM1617.9 1008.8L1630.6 1009.5L1630.6 1012.6L1617.9 1011.8ZM1633.4 1009.6L1646.2 1010.3L1646.2 1013.4L1633.4 1012.7ZM1649.1 1010.5L1661.9 1011.2L1661.9 1014.3L1649.1 1013.6ZM1664.8 1011.4L1677.7 1012.1L1677.7 1015.2L1664.8 1014.5ZM1680.5 1012.3L1693.5 1013.0L1693.5 1016.1L1680.5 1015.4ZM1696.3 1013.2L1709.4 1013.9L1709.4 1017.0L1696.3 1016.3ZM1712.3 1014.1L1725.4 1014.8L1725.4 1017.9L1712.3 1017.2ZM1465.7 1005.6L1471.1 1005.9L1471.1 1008.9L1465.7 1008.6ZM1473.7 1006.0L1485.9 1006.7L1485.9 1009.7L1473.7 1009.0ZM1488.6 1006.9L1500.9 1007.6L1500.9 1010.6L1488.6 1009.9ZM1503.6 1007.7L1515.9 1008.4L1515.9 1011.4L1503.6 1010.7ZM1518.6 1008.6L1531.0 1009.3L1531.0 1012.3L1518.6 1011.6ZM1533.7 1009.4L1546.1 1010.1L1546.1 1013.2L1533.7 1012.5ZM1548.8 1010.3L1561.3 1011.0L1561.3 1014.1L1548.8 1013.3ZM1564.1 1011.2L1576.6 1011.9L1576.6 1014.9L1564.1 1014.2ZM1579.4 1012.0L1592.0 1012.8L1592.0 1015.8L1579.4 1015.1ZM1594.7 1012.9L1607.4 1013.6L1607.4 1016.7L1594.7 1016.0ZM1610.2 1013.8L1622.9 1014.5L1622.9 1017.6L1610.2 1016.9ZM1625.7 1014.7L1638.4 1015.4L1638.4 1018.5L1625.7 1017.8ZM1641.2 1015.6L1654.1 1016.3L1654.1 1019.4L1641.2 1018.7ZM1656.9 1016.5L1669.8 1017.2L1669.8 1020.3L1656.9 1019.6ZM1672.6 1017.4L1685.6 1018.1L1685.6 1021.2L1672.6 1020.5ZM1688.4 1018.3L1701.4 1019.0L1701.4 1022.1L1688.4 1021.4ZM1704.3 1019.2L1717.4 1019.9L1717.4 1023.0L1704.3 1022.3ZM1720.2 1020.1L1729.2 1020.6L1729.2 1023.7L1720.2 1023.2Z" fill="#8c9e84"/>
<polygon points="1465.0,1009.7 1730.0,1025.0 1730.0,1051.6 1465.0,1035.8" fill="#66879e" stroke="#000" stroke-width="1.65" />
<circle cx="193.500" cy="884" r="6.600" fill="#fff" stroke="#111" stroke-width="2.200"/><circle cx="193.500" cy="884" r="2.600" fill="#111"/>
</g></svg><svg class="abs" style="left:1550px;top:300px" width="170" height="150" viewBox="1550 300 170 150" fill="none">
<path d="M1573.500 334.500 L1597 324.500 Q1602 322.500 1608 322.600 L1672 325.500 Q1684.500 326 1684.500 338 L1684.500 400 Q1684.500 407 1678 410 L1671 413.500 L1680 417.500 L1657 424.500 L1571.500 419.500 Z" fill="#dfe7ef"/>
<path d="M1603 324.500 L1668 327.300 Q1664 331 1652 334 L1589 331.300 Q1596 326 1603 324.500Z" fill="#fbfcfd"/>
<path d="M1590 344.500 L1638 346.800 Q1645.800 347.300 1645.600 355 L1644.500 404 Q1644.300 410.500 1638 410.800 L1590.500 411.500 Q1582.500 406 1582.300 400 L1582.500 352 Q1582.700 344.300 1590 344.500Z" fill="#fff"/>
<path d="M1660.500 352 Q1660.500 347 1665 345 L1678 339.500 Q1682.300 338 1682.300 343 L1682.300 397 Q1682.300 401.500 1678 403.500 L1665 409.500 Q1660.300 411.500 1660.300 406Z" fill="#fff"/>
<path d="M1601.500 326.500 L1601.500 343" stroke="#f4f7fa" stroke-width="1.200"/>
<path d="M1571 420.600 L1571.700 333" stroke="#0a0ac8" stroke-width="2"/>
<path d="M1571 420.600 L1655 425.900" stroke="#c81414" stroke-width="1.800"/>
<path d="M1571 420.600 L1595 410.800" stroke="#14a014" stroke-width="1.800"/>
<text x="1565.600" y="330" font-family="Liberation Sans,sans-serif" font-size="18.500" fill="#0a0ac8">Z</text>
<text x="1657.300" y="433.200" font-family="Liberation Sans,sans-serif" font-size="18.500" fill="#c81414">X</text>
<text x="1596.300" y="414.300" font-family="Liberation Sans,sans-serif" font-size="18.500" fill="#8fd596">Y</text>
<text x="0" y="0" transform="translate(1593.600 385.300) rotate(2.600) scale(0.885 1)" font-family="Liberation Sans,sans-serif" font-size="19.500" fill="#151515">Front</text>
<text x="0" y="0" transform="matrix(0.36 -0.17 0.02 1.05 1663.300 387.500)" font-family="Liberation Sans,sans-serif" font-size="19" fill="#151515">Right</text>
<text x="0" y="0" transform="matrix(0.95 0.07 -1.30 0.26 1619.500 329.500)" font-family="Liberation Sans,sans-serif" font-size="13" fill="#222">Top</text>
</svg>
<div id="tline"></div>
<div class="vdiv" style="left:240px"></div>
<div class="vdiv" style="left:384.5px"></div>
<div class="vdiv" style="left:1412px"></div>
<div class="vdiv" style="left:1488.5px"></div>
<svg class="abs" style="left:0;top:134px" width="1800" height="80" viewBox="0 134 1800 80" fill="none">
<path d="M117 170.5 L131 158.500 V165.500 C141 166 145.500 174 142 187 C140.500 180.500 137.500 176.500 131 176 V183 Z" fill="#8e8e8e"/>
<path d="M217 170.5 L203 158.500 V165.500 C193 166 188.500 174 192 187 C193.500 180.500 196.500 176.500 203 176 V183 Z" fill="#8e8e8e"/>
<path d="M271.900 161.400 H290.600 L294.600 165.600 V183.500 H276.900 L271.900 179.300Z" fill="#fff" stroke="#2f2f2f" stroke-width="2" stroke-linejoin="round"/>
<path d="M271.900 161.400 L276.900 166.100 V183.500 M276.900 166.100 H294.600" stroke="#9a9a9a" stroke-width="1.100" fill="none"/>
<path d="M276.400 157.700 C282.500 157.800 285.700 161.500 285.500 169.500" stroke="#2b2b2b" stroke-width="2.300" fill="none"/>
<path d="M279.300 168.800 H291.900 L285.600 175z" fill="#2b2b2b"/>
<circle cx="345.500" cy="170.700" r="14.500" stroke="#2f2f2f" stroke-width="2.100" fill="#fff"/>
<path d="M345.500 170.700 V159.300 A11.400 11.400 0 0 1 356.900 170.700 Z" fill="#ececec"/>
<path d="M345.500 159.300 V170.700 H356.900 A11.400 11.400 0 1 1 345.500 159.300" stroke="#2f2f2f" stroke-width="2" fill="none"/>
<path d="M414.800 162.400 V170 a11 5 0 0 0 22 0 V162.400" fill="#fff" stroke="#8f8f8f" stroke-width="1.500"/>
<ellipse cx="425.800" cy="162.400" rx="11" ry="5.100" fill="#fff" stroke="#8f8f8f" stroke-width="1.500"/>
<path d="M414.800 169.800 V179.800 a11 5 0 0 0 22 0 V169.800 a11 5 0 0 1 -6.300 4.300 V177.800 a4.700 2 0 0 1 -9.400 0 V174.100 a11 5 0 0 1 -6.300 -4.300z" fill="#8c8c8c" stroke="#303030" stroke-width="2" stroke-linejoin="round"/>
<path d="M463.5 167.25 l8.25 8.5 l8.25 -8.5" stroke="#8a8a8a" stroke-width="2" fill="none"/>
<circle cx="527.500" cy="167.500" r="9.500" stroke="#aaa" stroke-width="1.600"/>
<path d="M513.500 169 c9 0 14 7 15 16.500" stroke="#aaa" stroke-width="1.600"/>
<path d="M518 162 c10 -1.500 18 6 22 18" stroke="#2b2b2b" stroke-width="2.800"/>
<path d="M513 161.500 l9 -5.500 l0.500 10z M543 185.500 l-7.500 -7 l9.500 -3z" fill="#2b2b2b" stroke="#2b2b2b" stroke-width="1"/>
<rect x="584.500" y="158.500" width="25.500" height="24.500" stroke="#2b2b2b" stroke-width="2.200" stroke-dasharray="5.200 3.300" stroke-dashoffset="-2.500"/>
<g fill="#fff" stroke="#2b2b2b" stroke-width="1.800"><rect x="582.500" y="156.500" width="4" height="4"/><rect x="608" y="156.500" width="4" height="4"/><rect x="582.500" y="181" width="4" height="4"/><rect x="608" y="181" width="4" height="4"/>
<rect x="590" y="163" width="10.500" height="10.500"/><rect x="595" y="168" width="10.500" height="10.500"/></g>
<path d="M635.5 167.25 l8.25 8.5 l8.25 -8.5" stroke="#8a8a8a" stroke-width="2" fill="none"/>
<path d="M700.6 163.6 L700.5 165.3 L697.6 166.0 L697.1 167.1 L698.4 169.8 L697.1 170.9 L694.6 169.4 L693.5 169.8 L692.4 172.6 L690.7 172.5 L690.0 169.6 L688.9 169.1 L686.2 170.4 L685.1 169.1 L686.6 166.6 L686.2 165.5 L683.4 164.4 L683.5 162.7 L686.4 162.0 L686.9 160.9 L685.6 158.2 L686.9 157.1 L689.4 158.6 L690.5 158.2 L691.6 155.4 L693.3 155.5 L694.0 158.4 L695.1 158.9 L697.8 157.6 L698.9 158.9 L697.4 161.4 L697.8 162.5Z" fill="#2b2b2b"/><circle cx="692" cy="164" r="2.8" fill="#fff"/>
<path d="M713.5 175.0 L713.4 177.1 L709.8 178.1 L709.2 179.5 L710.7 182.9 L709.1 184.3 L705.8 182.6 L704.4 183.1 L703.0 186.5 L700.9 186.4 L699.9 182.8 L698.5 182.2 L695.1 183.7 L693.7 182.1 L695.4 178.8 L694.9 177.4 L691.5 176.0 L691.6 173.9 L695.2 172.9 L695.8 171.5 L694.3 168.1 L695.9 166.7 L699.2 168.4 L700.6 167.9 L702.0 164.5 L704.1 164.6 L705.1 168.2 L706.5 168.8 L709.9 167.3 L711.3 168.9 L709.6 172.2 L710.1 173.6Z" fill="#2b2b2b"/><circle cx="702.5" cy="175.5" r="4" fill="#fff"/>
<path d="M735.5 167.25 l8.25 8.5 l8.25 -8.5" stroke="#8a8a8a" stroke-width="2" fill="none"/>
<path d="M808 176 v-19 h-21.500 v24.500 h6" stroke="#2b2b2b" stroke-width="2"/>
<g stroke="#2b2b2b" stroke-width="1.700"><path d="M795 161.500h9.500M795 165h9.500M795 168.500h9.500"/><path d="M790.500 161.500h2M790.500 165h2M790.500 168.500h2"/></g>
<path d="M794 180 c5 -7 14 -7 18.500 0 c-4.500 6 -13.500 6 -18.500 0z" stroke="#2b2b2b" stroke-width="1.800"/><circle cx="803.300" cy="179.800" r="2.600" fill="#2b2b2b"/>
<path d="M795 186 l18 -14.500" stroke="#fff" stroke-width="4.500"/><path d="M794.500 186.500 l18.500 -15" stroke="#2b2b2b" stroke-width="1.800"/>
<path d="M835.5 167.25 l8.25 8.5 l8.25 -8.5" stroke="#8a8a8a" stroke-width="2" fill="none"/>
<circle cx="1451.500" cy="170.500" r="12.700" stroke="#8f8f93" stroke-width="2.300"/><path d="M1452 161 v10 h-7.500" stroke="#8f8f93" stroke-width="2"/>
<circle cx="1522.500" cy="168.500" r="9.700" stroke="#8f8f93" stroke-width="2.500"/><path d="M1529.500 175.500 l8 8" stroke="#8f8f93" stroke-width="3" stroke-linecap="round"/>
<g stroke="#2b2b2b" stroke-width="2.200" stroke-linejoin="round"><path d="M1591.500 173.500 h14 M1591.500 173.500 v9 h23 c5 0 8 -3 8 -6 v-9.500"/>
<ellipse cx="1611.500" cy="167" rx="11" ry="7"/><ellipse cx="1611.500" cy="166.500" rx="5" ry="2.600" stroke-width="1.800"/>
<path d="M1600.500 167.500 c0 5 4 6.500 8 6.500" /></g>
<path d="M1595.500 182 v-4 M1599 182 v-2.500 M1602.500 182 v-4 M1606 182 v-2.500 M1609.500 182 v-4 M1613 182 v-2.500 M1616.500 181.500 v-4" stroke="#2b2b2b" stroke-width="1.300"/>
<g stroke="#2b2b2b" stroke-linejoin="round"><path d="M1670.500 158 h20" stroke-width="2.500"/><path d="M1680.500 157 v23" stroke-width="2.500"/>
<path d="M1666.500 185 h28" stroke-width="3.500"/><path d="M1673 180.300 h15" stroke-width="2"/>
<path d="M1671 159 l-4.500 14.500 h9.500 z M1690 159 l-4.500 14.500 h9.500z" stroke-width="1.800" fill="#fff"/>
<path d="M1666 174.500 h10.500 M1685 174.500 h10.500" stroke-width="3.200"/></g>
</svg>
<div id="lbar"></div>
<svg class="abs" style="left:0;top:200px" width="160" height="240" viewBox="0 200 160 240" fill="none">
<!-- handle tab -->
<path d="M93 274.500 c0.500 5.500 3 8.500 9 8.500 h24 c10 0 16.500 6 16.500 16 v58 c0 10 -6.500 16 -16.500 16 h-24 c-6 0 -8.500 3 -9 8.500z" fill="#f2f2f2" stroke="#e3e3e3" stroke-width="1"/>
<rect x="92" y="276" width="2.500" height="104" fill="#f1f1f1"/>
<g stroke="#1850ae" stroke-width="3" stroke-linecap="butt"><path d="M110.500 299 l8 -8 l8 8" stroke-linejoin="miter"/><path d="M110.500 358 l8 8 l8 -8"/>
<path d="M118.300 312 v32.500 M108.300 319 v19 M128.300 319 v19" stroke-width="2.600" stroke-linecap="round"/></g>
<!-- tree list -->
<g stroke="#000" stroke-width="3.800"><path d="M41 219.700 h21.700 M50.700 230.800 h12 M50.700 241.700 h12 M41 252.500 h21.700"/></g>
<circle cx="27.600" cy="224" r="6.800" stroke="#000" stroke-width="3.300"/>
<path d="M27.600 231.500 v18 M27.600 243.500 h6 c5 0 8 -3 8.500 -9" stroke="#000" stroke-width="3.600"/>
<circle cx="27.600" cy="250.300" r="4.700" fill="#000"/><circle cx="42.500" cy="233.500" r="4.700" fill="#000"/>
<!-- dot plus -->
<circle cx="32" cy="318.200" r="6.700" fill="#3a3a3a"/>
<g fill="#3a3a3a"><rect x="30" y="299" width="4" height="3.800"/><rect x="30" y="305.500" width="4" height="3.800"/><rect x="30" y="327" width="4" height="3.800"/><rect x="30" y="333.600" width="4" height="3.800"/></g>
<path d="M42.800 329.200 h17.800 M51.700 320.300 v17.800" stroke="#1850ae" stroke-width="4.400"/>
<!-- speech -->
<ellipse cx="41.200" cy="397.300" rx="21" ry="14.600" fill="#000"/><path d="M31 405 L21.300 420 L42 409z" fill="#000"/>
</svg>
<div id="rbar"></div>
<div class="rsep" style="top:192.6px"></div>
<div class="rsep" style="top:276px"></div>
<div class="rsep" style="top:359.3px"></div>
<div class="rsep" style="top:442.6px"></div>
<div class="rsep" style="top:526px"></div>
<div class="rsep" style="top:609.3px"></div>
<div class="rsep" style="top:692.6px"></div>
<svg class="abs" style="left:1640px;top:190px" width="160" height="520" viewBox="1640 190 160 520" fill="none">
<!-- rotate lock -->
<circle cx="1683.400" cy="241.600" r="29" stroke="#b5b5b5" stroke-width="1.700" fill="#fff"/>
<g stroke="#9a9a9a" stroke-width="1.700"><path d="M1685.500 226.500 a15.500 15.500 0 0 1 12.500 14.500"/><path d="M1681.500 256.700 a15.500 15.500 0 0 1 -12.500 -14.500"/></g>
<path d="M1681.500 226.300 l5.500 -3.200 v6.400z M1685.500 256.900 l-5.500 3.200 v-6.400z" fill="#9a9a9a"/>
<rect x="1677" y="240.500" width="13" height="7.800" rx="1" fill="#a9a9a9"/><path d="M1680 240.500 v-2 a3.500 3.500 0 0 1 7 -1" stroke="#a9a9a9" stroke-width="1.600"/><rect x="1682.800" y="243" width="1.600" height="3.500" fill="#fff"/>
<!-- info -->
<circle cx="1763.400" cy="235.600" r="18" stroke="#2f2f2f" stroke-width="3"/>
<!-- share -->
<path d="M1776.600 306 L1750 319 L1776.600 332" stroke="#2f2f2f" stroke-width="4"/>
<circle cx="1776.600" cy="306" r="6.500" fill="#2f2f2f"/><circle cx="1750" cy="319" r="6.500" fill="#2f2f2f"/><circle cx="1776.600" cy="332" r="6.500" fill="#2f2f2f"/>
<!-- list -->
<rect x="1745.500" y="384.500" width="35.500" height="36" rx="5" stroke="#2f2f2f" stroke-width="3.200"/>
<path d="M1750.500 394.500 h21 M1755.500 401.500 h21 M1755.500 407.700 h21 M1759.500 414 h17" stroke="#2f2f2f" stroke-width="3.400"/><path d="M1753.500 396 v12.500 h4" stroke="#2f2f2f" stroke-width="1.500"/>
<!-- table + cube -->
<rect x="1742.500" y="465" width="20.500" height="15.500" fill="#7ab8e8" stroke="#1850ae" stroke-width="1.500"/>
<path d="M1742.500 470.300 h20.500 M1742.500 475.400 h20.500 M1749.300 465 v15.500 M1756.200 465 v15.500" stroke="#1850ae" stroke-width="1.700"/>
<rect x="1742.500" y="470.300" width="20.500" height="10.200" fill="none"/>
<g stroke="#2f2f2f" stroke-width="2" stroke-linejoin="round"><path d="M1751 480.500 v17.500 l15.500 7 l16 -7.500 v-18.500 l-16 -7.500 l-3.500 1.600" /><path d="M1763 481 l3.500 5.500 l16 -7.500 M1766.500 486.500 v18.500" /></g>
<!-- small cubes -->
<g stroke="#8c8c8c" stroke-width="1.400" stroke-linejoin="round"><path d="M1744 552.500 l2 -2 h9.500 l1.500 2 v9.500 h-11.500z" fill="#cfcfcf"/><path d="M1744 552.500 h11.500 v9.500" />
<path d="M1757.500 573.500 l3 -2.500 h8 v-4.500 l3 -2.500 h8.500 l3 3 v20.500 h-22.500 l-3 -3z" fill="#fff"/><path d="M1757.500 573.500 h11 v-6.500 M1760.500 587 v-10.500 M1768.500 573.500 l3 3 v-9 M1771.500 576.500 h-11 M1771.500 567 h11.500 v20" /></g>
<path d="M1750.500 564.500 v4.500 h4 M1757 569 h4 M1763.500 569 h4 v3.500" stroke="#1850ae" stroke-width="1.700"/>
<!-- variable table -->
<rect x="1742.500" y="632" width="20.500" height="15" fill="#777" stroke="#2f2f2f" stroke-width="1.500"/>
<path d="M1742.500 637.500 h20.500 M1742.500 642 h20.500 M1749.300 632 v15 M1756.200 632 v15" stroke="#2f2f2f" stroke-width="1.400"/>
<rect x="1743.500" y="638.300" width="19" height="8" fill="#fff" opacity=".75"/>
<path d="M1742.500 637.500 h20.500 M1742.500 642 h20.500 M1749.300 637 v10 M1756.200 637 v10" stroke="#555" stroke-width="1.300"/>
<path d="M1747.500 643 c-5.500 8 -5.500 17 0 25.500" stroke="#2f2f2f" stroke-width="3.300"/><path d="M1779.500 638.500 c5.500 8 5.500 19 0 28.500" stroke="#2f2f2f" stroke-width="3.300"/>
</svg>
<div class="abs" style="left:1754.500px;top:217px;width:18px;text-align:center;font:bold 31px/36px 'Liberation Serif',serif;color:#2f2f2f">i</div>
<div class="abs" style="left:1749px;top:629px;width:30px;text-align:center;font:italic bold 39px/44px 'Liberation Serif',serif;color:#2f2f2f">x</div>
<div id="hdr">
<div class="t" style="left:10.5px;top:16.3px;font-size:22.8px;letter-spacing:1.15px">15:09</div>
<div class="t" style="left:90.5px;top:16.3px;font-size:22.8px;letter-spacing:1.0px">Vr 26 dec</div>
<div class="t" style="left:82px;top:69.2px;font-size:25.5px;letter-spacing:0.95px">Stationsgebouw</div>
<div class="t" style="left:82px;top:100.6px;font-size:22.5px;letter-spacing:0.6px;opacity:.95">Main</div>
<div class="t" style="left:1687px;top:16.3px;font-size:22.8px;letter-spacing:2.1px">98%</div>
<svg class="abs" style="left:0;top:0" width="1800" height="134" viewBox="0 0 1800 134" fill="none">
<path d="M47 73.5 L29.5 90 L47 106.5" stroke="#fff" stroke-width="3"/>
<!-- wifi -->
<g fill="#fff"><path d="M1667.4 35.2 l-3.5 -4.2 a5.300 5.300 0 0 1 7 0 z"/>
<path d="M1661.700 28.500 l-2.500 -3 a12.600 12.600 0 0 1 16.400 0 l-2.500 3 a8.700 8.700 0 0 0 -11.400 0z"/>
<path d="M1657.300 23.300 l-2.500 -3 a19.600 19.600 0 0 1 25.200 0 l-2.500 3 a15.700 15.700 0 0 0 -20.200 0z"/></g>
<!-- battery -->
<rect x="1747.100" y="16.700" width="39.300" height="19.800" rx="6.200" stroke="#fff" stroke-opacity=".5" stroke-width="1.600"/>
<rect x="1749.600" y="19.300" width="34.200" height="14.600" rx="4" fill="#fff"/>
<path d="M1789.300 23.200 v6.800 a3.600 3.600 0 0 0 0 -6.800z" fill="#fff" fill-opacity=".55"/>
<!-- people -->
<g stroke="#fff" stroke-width="2.700" stroke-linejoin="miter">
<path d="M1609 103.700 H1593.600 L1596.200 98.600 C1598.500 96.300 1603.800 95.300 1605.500 92.800 C1606.600 90.800 1603.600 86.500 1603.600 80 C1603.600 73.500 1606.500 69.300 1610.300 69.300 C1613.600 69.300 1616 71.800 1617 76"/>
<path d="M1604.700 109.400 H1639.700 L1636.500 103.600 C1634 101 1629 100 1627.400 97.500 C1626.300 95.500 1629.700 92 1629.700 85.600 C1629.700 79 1626.500 74.600 1622.200 74.600 C1617.900 74.600 1614.700 79 1614.700 85.600 C1614.700 92 1618.100 95.500 1617 97.500 C1615.400 100 1610.400 101 1607.900 103.600 Z" fill="#1850ae"/>
</g>
<!-- cast / goggles -->
<path d="M1666.200 102.100 a6.700 6.700 0 0 1 6.700 6.700 h-6.700z" fill="#fff"/>
<g stroke="#fff" stroke-width="3.700">
<path d="M1666.200 95.400 a13.400 13.400 0 0 1 13.400 13.400"/>
<path d="M1666.200 88.600 a20.200 20.200 0 0 1 20.200 20.200"/>
</g>
<path d="M1673.300 86 C1673.300 79.500 1680 74 1690 73.600 C1697 73.300 1703.500 73.600 1707.500 76.500 C1711.800 79.600 1712.600 86 1710 91 C1707.700 95.300 1702.500 95.300 1698.800 92.800 C1696.500 91.200 1694 90.500 1691.800 91.300 C1689.800 92 1688 93 1686.400 94.100" stroke="#fff" stroke-width="4.200" stroke-linecap="round" fill="none"/>
<path d="M1681.500 80.300 C1688 76.800 1697.500 76.800 1703.500 80" stroke="#fff" stroke-width="1.500" fill="none" stroke-linecap="round"/>
<!-- help -->
<circle cx="1763" cy="90" r="21.500" fill="#fff"/>
</svg>
<div class="t" style="left:1633px;top:66.500px;font-size:16.500px;font-weight:700;color:#f1b61a">1</div>
<div class="t" style="left:1748.500px;top:69.500px;font-size:41px;font-weight:700;width:30px;color:#1850ae;text-align:center">?</div>
</div>
<div id="tabs"><div class="top"></div><div class="bot"></div>
<svg class="ti" style="left:78.0px" width="30" height="32" viewBox="0 0 30 32" fill="none"><g stroke="#333" stroke-width="1.700" stroke-linejoin="round">
<path d="M1 9.500 l2.500 -2.500 h8 l2.500 2.500 v20 h-9.500 l-3.500 -3.500z" fill="#fff"/><path d="M14.500 3 l2.500 -2.200 h9 l3 3 v26 h-11.500 l-3 -2.500z" fill="#fff"/>
</g><path d="M1.500 9.500 l3.500 3 h9 M5 12.500 v16.500 M14.500 3 l3 3 h11 M17.500 6 v23" stroke="#555" stroke-width="1"/><path d="M6.500 13 v16 M19 6.500 v22.500" stroke="#bbb" stroke-width="1"/></svg>
<div class="lbl" style="left:111.8px">Bodemplaat</div>
<div class="sep" style="left:289.3px"></div>
<svg class="ti" style="left:311.4px" width="30" height="32" viewBox="0 0 30 32" fill="none"><g stroke="#333" stroke-width="1.700" stroke-linejoin="round">
<path d="M1 9.500 l2.500 -2.500 h8 l2.500 2.500 v20 h-9.500 l-3.500 -3.500z" fill="#fff"/><path d="M14.500 3 l2.500 -2.200 h9 l3 3 v26 h-11.500 l-3 -2.500z" fill="#fff"/>
</g><path d="M1.500 9.500 l3.500 3 h9 M5 12.500 v16.500 M14.500 3 l3 3 h11 M17.500 6 v23" stroke="#555" stroke-width="1"/><path d="M6.500 13 v16 M19 6.500 v22.500" stroke="#bbb" stroke-width="1"/></svg>
<div class="lbl" style="left:345.2px">Perrongevel links</div>
<div class="sep" style="left:522.6px"></div>
<svg class="ti" style="left:544.7px" width="30" height="32" viewBox="0 0 30 32" fill="none"><g stroke="#333" stroke-width="1.700" stroke-linejoin="round">
<path d="M1 9.500 l2.500 -2.500 h8 l2.500 2.500 v20 h-9.500 l-3.500 -3.500z" fill="#fff"/><path d="M14.500 3 l2.500 -2.200 h9 l3 3 v26 h-11.500 l-3 -2.500z" fill="#fff"/>
</g><path d="M1.500 9.500 l3.500 3 h9 M5 12.500 v16.500 M14.500 3 l3 3 h11 M17.500 6 v23" stroke="#555" stroke-width="1"/><path d="M6.500 13 v16 M19 6.500 v22.500" stroke="#bbb" stroke-width="1"/></svg>
<div class="lbl" style="left:578.5px">achtergevel lins</div>
<div class="sep" style="left:756.0px"></div>
<svg class="ti" style="left:778.1px" width="30" height="32" viewBox="0 0 30 32" fill="none"><g stroke="#333" stroke-width="1.700" stroke-linejoin="round">
<path d="M1 9.500 l2.500 -2.500 h8 l2.500 2.500 v20 h-9.500 l-3.500 -3.500z" fill="#fff"/><path d="M14.500 3 l2.500 -2.200 h9 l3 3 v26 h-11.500 l-3 -2.500z" fill="#fff"/>
</g><path d="M1.500 9.500 l3.500 3 h9 M5 12.500 v16.500 M14.500 3 l3 3 h11 M17.500 6 v23" stroke="#555" stroke-width="1"/><path d="M6.500 13 v16 M19 6.500 v22.500" stroke="#bbb" stroke-width="1"/></svg>
<div class="lbl" style="left:811.9px">Dak links</div>
<div class="sep" style="left:989.3px"></div>
<svg class="ti" style="left:1011.4px" width="30" height="32" viewBox="0 0 30 32" fill="none"><g stroke="#333" stroke-width="1.700" stroke-linejoin="round">
<path d="M1 9.500 l2.500 -2.500 h8 l2.500 2.500 v20 h-9.500 l-3.500 -3.500z" fill="#fff"/><path d="M14.500 3 l2.500 -2.200 h9 l3 3 v26 h-11.500 l-3 -2.500z" fill="#fff"/>
</g><path d="M1.500 9.500 l3.500 3 h9 M5 12.500 v16.500 M14.500 3 l3 3 h11 M17.500 6 v23" stroke="#555" stroke-width="1"/><path d="M6.500 13 v16 M19 6.500 v22.500" stroke="#bbb" stroke-width="1"/></svg>
<div class="lbl" style="left:1045.2px">Perrongevel rechts</div>
<div class="sep" style="left:1222.7px"></div>
<svg class="ti" style="left:1244.8px" width="30" height="32" viewBox="0 0 30 32" fill="none"><g stroke="#333" stroke-width="1.700" stroke-linejoin="round">
<path d="M1 9.500 l2.500 -2.500 h8 l2.500 2.500 v20 h-9.500 l-3.500 -3.500z" fill="#fff"/><path d="M14.500 3 l2.500 -2.200 h9 l3 3 v26 h-11.500 l-3 -2.500z" fill="#fff"/>
</g><path d="M1.500 9.500 l3.500 3 h9 M5 12.500 v16.500 M14.500 3 l3 3 h11 M17.500 6 v23" stroke="#555" stroke-width="1"/><path d="M6.500 13 v16 M19 6.500 v22.500" stroke="#bbb" stroke-width="1"/></svg>
<div class="lbl" style="left:1278.6px">Kopgevel</div>
<div class="sep" style="left:1456.1px"></div>
<svg class="ti" style="left:1478.2px" width="30" height="32" viewBox="0 0 30 32" fill="none"><g stroke="#333" stroke-width="1.700" stroke-linejoin="round">
<path d="M1 9.500 l2.500 -2.500 h8 l2.500 2.500 v20 h-9.500 l-3.500 -3.500z" fill="#fff"/><path d="M14.500 3 l2.500 -2.200 h9 l3 3 v26 h-11.500 l-3 -2.500z" fill="#fff"/>
</g><path d="M1.500 9.500 l3.500 3 h9 M5 12.500 v16.500 M14.500 3 l3 3 h11 M17.500 6 v23" stroke="#555" stroke-width="1"/><path d="M6.500 13 v16 M19 6.500 v22.500" stroke="#bbb" stroke-width="1"/></svg>
<div class="lbl" style="left:1512.0px">Tussengevel links</div>
<div class="sep" style="left:1689.4px"></div>
<svg class="ti" style="left:1711.5px" width="30" height="32" viewBox="0 0 30 32" fill="none"><g stroke="#333" stroke-width="1.700" stroke-linejoin="round">
<path d="M1 9.500 l2.500 -2.500 h8 l2.500 2.500 v20 h-9.500 l-3.500 -3.500z" fill="#fff"/><path d="M14.500 3 l2.500 -2.200 h9 l3 3 v26 h-11.500 l-3 -2.500z" fill="#fff"/>
</g><path d="M1.500 9.500 l3.500 3 h9 M5 12.500 v16.500 M14.500 3 l3 3 h11 M17.500 6 v23" stroke="#555" stroke-width="1"/><path d="M6.500 13 v16 M19 6.500 v22.500" stroke="#bbb" stroke-width="1"/></svg>
<div class="lbl" style="left:1745.3px">Tussengevel rechts</div>
</div>
<div id="srch"><svg width="58" height="58" viewBox="0 0 58 58" fill="none">
<rect x="14.200" y="17.300" width="29.800" height="13.500" rx="1" fill="#fff"/>
<circle cx="30.600" cy="29.800" r="9.800" fill="#1850ae"/>
<circle cx="30.600" cy="29.800" r="6" stroke="#fff" stroke-width="3"/>
<path d="M35.500 34.500 l7 6.500" stroke="#1850ae" stroke-width="7" /><path d="M35 34 l7.200 6.800" stroke="#fff" stroke-width="3.200" stroke-linecap="round"/></svg></div>
<svg class="abs" style="left:1700px;top:1250px" width="100" height="100" viewBox="1700 1250 100 100" fill="none">
<defs><radialGradient id="cg" cx="0" cy="0" r="1" gradientUnits="userSpaceOnUse" gradientTransform="translate(1801 1336) scale(34 48)"><stop offset="0" stop-color="#000" stop-opacity=".62"/><stop offset=".3" stop-color="#000" stop-opacity=".42"/><stop offset=".65" stop-color="#000" stop-opacity=".13"/><stop offset="1" stop-color="#000" stop-opacity="0"/></radialGradient>
<clipPath id="cc"><rect x="1700" y="1292" width="91.500" height="58"/></clipPath>
<radialGradient id="cg2" cx="0" cy="0" r="1" gradientUnits="userSpaceOnUse" gradientTransform="translate(1806 1320) scale(40 70)"><stop offset="0" stop-color="#000" stop-opacity=".12"/><stop offset=".6" stop-color="#000" stop-opacity=".03"/><stop offset="1" stop-color="#000" stop-opacity="0"/></radialGradient></defs>
<rect x="1700" y="1250" width="100" height="100" fill="url(#cg2)"/>
<rect x="1791.500" y="1292" width="9" height="58" fill="#fff"/>
<rect x="1700" y="1292" width="91.500" height="58" fill="url(#cg)" clip-path="url(#cc)"/>
<path d="M1769.500 1340.500 c11 0.500 20.500 -6.500 21.500 -20.500" stroke="#111" stroke-width="4.600" stroke-linecap="round"/>
</svg>
</div></body></html>
